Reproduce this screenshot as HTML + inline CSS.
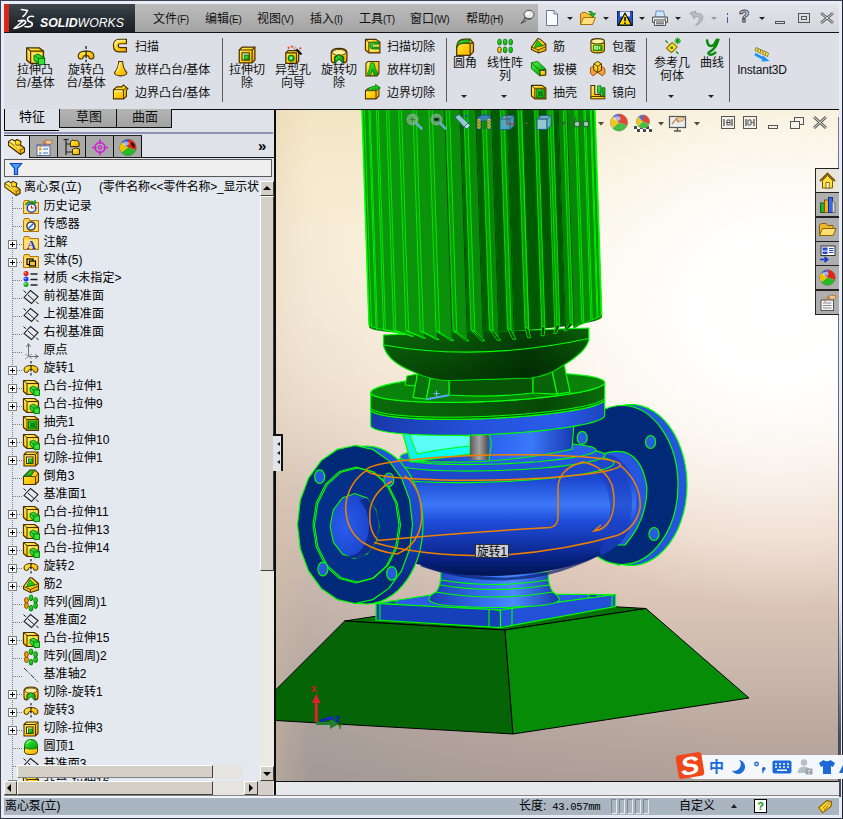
<!DOCTYPE html>
<html lang="zh-CN"><head><meta charset="utf-8"><title>SolidWorks</title>
<style>
html,body{margin:0;padding:0}
body{width:843px;height:819px;position:relative;overflow:hidden;background:#e9ecf3;font-family:"Liberation Sans","Noto Sans CJK SC",sans-serif;font-size:12px;color:#000}
.a{position:absolute}
.t{position:absolute;white-space:nowrap;line-height:14px;font-size:12px}
.c{text-align:center}
.m{position:absolute;top:11px;font-size:12px;line-height:16px;white-space:nowrap;color:#111}
.m i{font-style:normal;font-size:10px;letter-spacing:-0.3px}
.rb{position:absolute;font-size:12px;line-height:13px;text-align:center;white-space:nowrap;color:#111}
.rs{position:absolute;font-size:12px;line-height:14px;white-space:nowrap;color:#111}
.sep{position:absolute;width:1px;background:#5a5a5a;top:38px;height:64px}
.dd{position:absolute;width:0;height:0;border-left:3px solid transparent;border-right:3px solid transparent;border-top:3px solid #222}
.tr{position:absolute;left:44px;font-size:12px;line-height:14px;white-space:nowrap;color:#000;letter-spacing:0.1px}
.pl{position:absolute;left:8px;width:9px;height:9px;box-sizing:border-box;border:1px solid #808080;background:#fff}
.pl:before{content:"";position:absolute;left:1px;top:3px;width:5px;height:1px;background:#000}
.pl:after{content:"";position:absolute;left:3px;top:1px;width:1px;height:5px;background:#000}
.hd{position:absolute;height:1px;border-top:1px dotted #808080}
svg{position:absolute;overflow:visible}
</style></head>
<body>
<svg width="0" height="0" style="position:absolute"><defs><linearGradient id="gy" x1="0" y1="0" x2="1" y2="1"><stop offset="0" stop-color="#fff27a"/><stop offset="0.45" stop-color="#ffd414"/><stop offset="1" stop-color="#f0a800"/></linearGradient><linearGradient id="gg" x1="0" y1="0" x2="1" y2="1"><stop offset="0" stop-color="#58f058"/><stop offset="0.5" stop-color="#1ec81e"/><stop offset="1" stop-color="#0a9a0a"/></linearGradient></defs></svg>
<div class="a" style="left:0;top:0;width:843px;height:819px;box-sizing:border-box;border:1px solid #3a4152;border-right:1.5px solid #1c2232;border-bottom:1.5px solid #2a3040"></div>
<div class="a" style="left:4px;top:4px;width:131px;height:28px;background:linear-gradient(#3d464e,#2b3138 45%,#1b1f24)"></div>
<div class="a" style="left:4px;top:4px;width:5px;height:28px;background:#d8261a"></div>
<div class="a" style="left:135px;top:4px;width:403px;height:28px;background:linear-gradient(#bcbcbc,#b0b0b0 50%,#a4a4a4)"></div>
<div class="a" style="left:538px;top:4px;width:301px;height:28px;background:linear-gradient(#e2e4e9,#d3d6dc)"></div>
<div class="a" style="left:4px;top:32px;width:835px;height:1px;background:#101216"></div>
<div class="a" style="left:4px;top:33px;width:131px;height:1px;background:#f0f1f5"></div>
<svg style="left:10px;top:6px" width="124" height="26" viewBox="0 0 124 26"><g fill="none" stroke="#fff" stroke-width="1.6" stroke-linecap="round" stroke-linejoin="round"><path d="M11.5 3.5 L17.5 4.5 Q15.5 9 13 10.5"/><path d="M13.5 14.5 L4 22.5 Q11 21.5 15.5 17 Q16.5 13 8.5 15"/><path d="M23.5 10.5 Q18 9.5 17.5 13 Q17.5 15.5 20.5 16 Q23 17 22 19.5 Q20 21.5 15 20.5"/></g><text x="30" y="20.5" font-family='"Liberation Sans",sans-serif' font-size="13.5" font-style="italic" fill="#fff" textLength="84" lengthAdjust="spacingAndGlyphs"><tspan font-weight="bold">SOLID</tspan><tspan font-weight="normal">WORKS</tspan></text></svg>
<div class="m" style="left:153px">文件<i>(F)</i></div>
<div class="m" style="left:205px">编辑<i>(E)</i></div>
<div class="m" style="left:257px">视图<i>(V)</i></div>
<div class="m" style="left:310px">插入<i>(I)</i></div>
<div class="m" style="left:359px">工具<i>(T)</i></div>
<div class="m" style="left:410px">窗口<i>(W)</i></div>
<div class="m" style="left:466px">帮助<i>(H)</i></div>
<div class="a" style="left:4px;top:33px;width:835px;height:76px;background:#dcdfe5"></div>
<div class="a" style="left:59px;top:109px;width:780px;height:1px;background:#0c0c0c"></div>
<svg style="left:24.92px;top:45.42px" width="20.16" height="20.16" viewBox="0 0 18 18"><path d="M1.5 2.500 H12.500 L16.500 5.500 V16.500 H5 L1.5 13.500 Z" fill="url(#gy)" stroke="#4a3000" stroke-width="1.2" stroke-linejoin="round"/><path d="M5 5.500 H16.500 M5 5.500 V16.500 M1.5 2.500 L5 5.500" fill="none" stroke="#4a3000" stroke-width="1"/><path d="M6.500 7 H15 V15 H6.500 Z" fill="#ffe56a" stroke="none"/><path d="M8 9.500 L11.500 8 L17.500 11.500 V16.500 L13.500 17.800 L8 13.500 Z" fill="url(#gg)" stroke="#0a7a0a" stroke-width="0.9"/><path d="M12 12 H17.500 V17.500 H12 Z" fill="#38e038" stroke="#0a7a0a" stroke-width="0.9"/><path d="M8 9.500 L12 12" stroke="#0a7a0a" stroke-width="0.8"/></svg>
<div class="rb" style="left:-5px;top:64px;width:80px">拉伸凸<br>台/基体</div>
<svg style="left:75.92px;top:45.42px" width="20.16" height="20.16" viewBox="0 0 18 18"><path d="M9 1 V17" stroke="#000" stroke-width="1" stroke-dasharray="2.5 1.5" fill="none"/><path d="M2 10 Q2 5.5 9 5.5 Q16 5.5 16 10 Q16 12.5 13.5 12.5 Q11.5 12.5 11.5 10.5 Q11.5 9.5 9 9.5 Q6.5 9.5 6.5 10.5 Q6.5 12.5 4.5 12.5 Q2 12.5 2 10 Z" fill="url(#gy)" stroke="#4a3000" stroke-width="1"/><path d="M9 5.5 V9.5" stroke="#000" stroke-width="1" fill="none"/></svg>
<div class="rb" style="left:46px;top:64px;width:80px">旋转凸<br>台/基体</div>
<svg style="left:111.83px;top:37.33px" width="17.34" height="17.34" viewBox="0 0 18 18"><path d="M15 2.5 H8 Q1.5 2.5 1.5 9 Q1.5 15.5 8 15.5 H15 V11 H8.5 Q6.5 11 6.5 9 Q6.5 7 8.5 7 H15 Z" fill="url(#gy)" stroke="#4a3000" stroke-width="1.2"/><path d="M14 3.5 H8 Q3 3.5 2.8 8" stroke="#fff0a0" stroke-width="1.2" fill="none"/></svg>
<div class="rs" style="left:135px;top:40px">扫描</div>
<svg style="left:111.83px;top:60.33px" width="17.34" height="17.34" viewBox="0 0 18 18"><path d="M7 1.5 H11 Q11.5 9 15.5 13 Q15 16.5 9 16.5 Q3 16.5 2.5 13 Q6.5 9 7 1.5 Z" fill="url(#gy)" stroke="#4a3000" stroke-width="1.1"/><path d="M8 3 Q7.5 9 4.5 12.5" stroke="#fff0a0" stroke-width="1.3" fill="none"/></svg>
<div class="rs" style="left:135px;top:63px">放样凸台/基体</div>
<svg style="left:111.83px;top:83.33px" width="17.34" height="17.34" viewBox="0 0 18 18"><path d="M1.5 7 L5 4 H10 L12 2 L16.5 6 L15 7 V14 L12 16.5 H1.5 Z" fill="url(#gy)" stroke="#4a3000" stroke-width="1.1"/><path d="M1.5 7 H12 V16.5 M12 7 L15 4.5" stroke="#4a3000" fill="none" stroke-width="1"/><path d="M3 8.5 H10.5" stroke="#fff0a0" stroke-width="1.4"/></svg>
<div class="rs" style="left:135px;top:86px">边界凸台/基体</div>
<div class="sep" style="left:222px"></div>
<svg style="left:236.92px;top:45.42px" width="20.16" height="20.16" viewBox="0 0 18 18"><path d="M2 4.5 L4.5 2 H16 V13.5 L13.5 16 H2 Z" fill="url(#gy)" stroke="#4a3000" stroke-width="1.1"/><path d="M2 4.5 H13.5 V16 M13.5 4.5 L16 2" fill="none" stroke="#4a3000" stroke-width="1"/><rect x="4.5" y="7" width="6.5" height="6.5" fill="#fff7c0" stroke="#4a3000" stroke-width="1"/><rect x="6.5" y="9" width="4" height="4" fill="url(#gg)" stroke="#0a7a0a" stroke-width="0.9"/></svg>
<div class="rb" style="left:207px;top:64px;width:80px">拉伸切<br>除</div>
<svg style="left:282.92px;top:45.42px" width="20.16" height="20.16" viewBox="0 0 18 18"><path d="M2.5 7 L4.5 5 H14 V14.5 L12 16.5 H2.5 Z" fill="url(#gy)" stroke="#4a3000" stroke-width="1.1"/><path d="M2.5 7 H12 V16.5" fill="none" stroke="#4a3000"/><circle cx="7.3" cy="11.8" r="2.6" fill="url(#gg)" stroke="#0a7a0a"/><circle cx="7.3" cy="11.8" r="0.9" fill="#fff"/><path d="M10 2 L16.5 8.5" stroke="#111" stroke-width="2"/><path d="M10 2 L12 4" stroke="#ddd" stroke-width="1.6"/><path d="M5 1.5 v2 M4 2.5 h2 M8 0.5 v2 M7 1.5 h2 M15.5 2 v2 M14.5 3 h2" stroke="#f04000" stroke-width="0.9"/></svg>
<div class="rb" style="left:253px;top:64px;width:80px">异型孔<br>向导</div>
<svg style="left:328.92px;top:45.42px" width="20.16" height="20.16" viewBox="0 0 18 18"><path d="M2 7 Q2 3 9 3 Q16 3 16 7 V13 Q16 16 13 16 V11 L9 8 L5 11 V16 Q2 16 2 13 Z" fill="url(#gy)" stroke="#4a3000" stroke-width="1.1"/><ellipse cx="9" cy="6.6" rx="6" ry="2.6" fill="#fff0a0" stroke="#4a3000" stroke-width="0.8"/><path d="M5.5 16 V11.5 L9 8.5 L12.5 11.5 V16 L9 12.5 Z" fill="url(#gg)" stroke="#0a7a0a" stroke-width="0.9"/></svg>
<div class="rb" style="left:299px;top:64px;width:80px">旋转切<br>除</div>
<svg style="left:363.83px;top:37.33px" width="17.34" height="17.34" viewBox="0 0 18 18"><path d="M1.5 2.500 H12.500 L16.500 5.500 V16.500 H5 L1.5 13.500 Z" fill="url(#gy)" stroke="#4a3000" stroke-width="1.2" stroke-linejoin="round"/><path d="M5 5.500 H16.500 M5 5.500 V16.500 M1.5 2.500 L5 5.500" fill="none" stroke="#4a3000" stroke-width="1"/><path d="M6.500 7 H15 V15 H6.500 Z" fill="#ffe56a" stroke="none"/><path d="M15 5.5 H9.5 Q6 5.5 6 9 Q6 12.5 9.5 12.5 H15 V10.5 H10 Q8.5 10.5 8.5 9 Q8.5 7.5 10 7.5 H15 Z" fill="url(#gg)" stroke="#0a7a0a" stroke-width="0.9"/></svg>
<div class="rs" style="left:387px;top:40px">扫描切除</div>
<svg style="left:363.83px;top:60.33px" width="17.34" height="17.34" viewBox="0 0 18 18"><path d="M2 3.5 L4 1.5 H15.5 V14 L13.5 16.5 H2 Z" fill="url(#gy)" stroke="#4a3000" stroke-width="1.1"/><path d="M7 3 H10.5 Q11 9 14.5 14.5 L11 16.5 L8.7 10 L6.5 16.5 L3.5 14.5 Q6.5 9 7 3 Z" fill="url(#gg)" stroke="#0a7a0a" stroke-width="0.9"/></svg>
<div class="rs" style="left:387px;top:63px">放样切割</div>
<svg style="left:363.83px;top:83.33px" width="17.34" height="17.34" viewBox="0 0 18 18"><path d="M1.5 8 L4.5 5.5 H15.5 V13.5 L12.5 16.5 H1.5 Z" fill="url(#gy)" stroke="#4a3000" stroke-width="1.1"/><path d="M1.5 8 H12.5 V16.5 M12.5 8 L15.5 5.5" fill="none" stroke="#4a3000"/><path d="M4 6 L9 3.5 H12 V1.5 L17 5 L12 8.5 V6.5 H9.5 L6.5 8 Z" fill="url(#gg)" stroke="#0a7a0a" stroke-width="0.9"/></svg>
<div class="rs" style="left:387px;top:86px">边界切除</div>
<div class="sep" style="left:446px"></div>
<svg style="left:454.92px;top:37.42px" width="20.16" height="20.16" viewBox="0 0 18 18"><path d="M1.5 9 Q1.5 2 9 2 H13.5 L16.5 5.5 V13 L13.5 16.5 H1.5 Z" fill="url(#gy)" stroke="#4a3000" stroke-width="1.1"/><path d="M1.5 9.5 Q2.5 5.5 9 5.5 H13.5 L16.5 5.5 M13.5 5.5 V16.5" fill="none" stroke="#4a3000" stroke-width="1"/><path d="M2 8.5 Q2.5 2.8 9 2.6 H13 L12.5 5 H8.5 Q3.5 5 2 8.5 Z" fill="url(#gg)" stroke="#0a7a0a" stroke-width="0.8"/></svg>
<div class="rb" style="left:425px;top:57px;width:80px">圆角</div>
<svg style="left:494.92px;top:37.42px" width="20.16" height="20.16" viewBox="0 0 18 18"><rect x="2.5" y="2" width="3" height="5" rx="1.4" fill="url(#gg)" stroke="#0a7a0a" stroke-width="0.8"/><rect x="7.5" y="2" width="3" height="5" rx="1.4" fill="url(#gg)" stroke="#0a7a0a" stroke-width="0.8"/><rect x="12.5" y="2" width="3" height="5" rx="1.4" fill="url(#gg)" stroke="#0a7a0a" stroke-width="0.8"/><rect x="2.5" y="9" width="3" height="5" rx="1.4" fill="url(#gy)" stroke="#4a3000" stroke-width="0.8"/><rect x="7.5" y="9" width="3" height="5" rx="1.4" fill="url(#gg)" stroke="#0a7a0a" stroke-width="0.8"/><rect x="12.5" y="9" width="3" height="5" rx="1.4" fill="url(#gg)" stroke="#0a7a0a" stroke-width="0.8"/></svg>
<div class="rb" style="left:465px;top:57px;width:80px">线性阵<br>列</div>
<div class="dd" style="left:461px;top:95px"></div><div class="dd" style="left:501px;top:95px"></div>
<svg style="left:529.83px;top:37.33px" width="17.34" height="17.34" viewBox="0 0 18 18"><path d="M1.5 10.500 L8 1.5 L10 2 L16.500 7.500 V14 L8.500 16.500 L1.5 13 Z" fill="url(#gy)" stroke="#4a3000" stroke-width="1.1" stroke-linejoin="round"/><path d="M8 3.500 L13 9 L4.500 11 Z" fill="url(#gg)" stroke="#0a7a0a" stroke-width="0.9"/><path d="M1.5 10.500 L8.500 13.500 L16.500 10 M8.500 13.500 V16.500 M13 9 L16.500 7.500" fill="none" stroke="#4a3000" stroke-width="0.9"/></svg>
<div class="rs" style="left:553px;top:40px">筋</div>
<svg style="left:529.83px;top:60.33px" width="17.34" height="17.34" viewBox="0 0 18 18"><path d="M1.5 3 L8 1.5 L16.5 9.5 V15.5 L10 16.5 L1.5 9 Z" fill="url(#gg)" stroke="#0a7a0a" stroke-width="1"/><path d="M1.5 3 L10 10.5 L16.5 9.5 M10 10.5 V16.5" stroke="#0a7a0a" fill="none"/><rect x="10.5" y="10.8" width="5.5" height="5" fill="url(#gy)" stroke="#4a3000" stroke-width="0.9"/></svg>
<div class="rs" style="left:553px;top:63px">拔模</div>
<svg style="left:529.83px;top:83.33px" width="17.34" height="17.34" viewBox="0 0 18 18"><path d="M1.5 2.500 H12.500 L16.500 5.500 V16.500 H5 L1.5 13.500 Z" fill="url(#gy)" stroke="#4a3000" stroke-width="1.2" stroke-linejoin="round"/><path d="M5 5.500 H16.500 M5 5.500 V16.500 M1.5 2.500 L5 5.500" fill="none" stroke="#4a3000" stroke-width="1"/><path d="M6.500 7 H15 V15 H6.500 Z" fill="#ffe56a" stroke="none"/><rect x="6.500" y="7" width="8.500" height="8" fill="url(#gg)" stroke="#0a7a0a" stroke-width="1"/><rect x="8.500" y="9" width="4.500" height="4" fill="#0a8a0a" stroke="#0a7a0a" stroke-width="0.7"/><path d="M6.500 7 L8.500 9 M15 7 L13 9 M6.500 15 L8.500 13 M15 15 L13 13" stroke="#0a7a0a" stroke-width="0.7"/></svg>
<div class="rs" style="left:553px;top:86px">抽壳</div>
<svg style="left:588.83px;top:37.33px" width="17.34" height="17.34" viewBox="0 0 18 18"><path d="M2 4.5 V13.5 Q2 16.5 9 16.5 Q16 16.5 16 13.5 V4.5" fill="url(#gy)" stroke="#4a3000" stroke-width="1.1"/><ellipse cx="9" cy="4.5" rx="7" ry="2.8" fill="#fff0a0" stroke="#4a3000" stroke-width="1.1"/><rect x="4.5" y="8.5" width="9" height="5.5" fill="url(#gg)" stroke="#0a7a0a" stroke-width="0.8"/><path d="M6 10 h3 v2.5 h-3 z M11 10 v2.8" stroke="#fff8b0" stroke-width="1" fill="none"/></svg>
<div class="rs" style="left:612px;top:40px">包覆</div>
<svg style="left:588.83px;top:60.33px" width="17.34" height="17.34" viewBox="0 0 18 18"><path d="M1.5 8 L5.5 6 L9 8 L12.5 6 L16.5 9 V14 L14 16.5 L9 13 L4 16.5 L1.5 14 Z" fill="#f0a040" stroke="#a05000" stroke-width="1"/><path d="M5 4 L9 1.5 L13 4 V10.5 L9 13 L5 10.5 Z" fill="url(#gy)" stroke="#4a3000" stroke-width="1"/><path d="M5 4 L9 6.5 L13 4 M9 6.5 V13" fill="none" stroke="#4a3000" stroke-width="0.9"/></svg>
<div class="rs" style="left:612px;top:63px">相交</div>
<svg style="left:588.83px;top:83.33px" width="17.34" height="17.34" viewBox="0 0 18 18"><path d="M2 2.5 H6 V12 H12 V16 H2 Z" fill="url(#gy)" stroke="#4a3000" stroke-width="1.1"/><path d="M9 3 H12.5 V10.5 H9 Z M13.5 5 H16.5 V14 H13.5 Z" fill="url(#gg)" stroke="#0a7a0a" stroke-width="1"/><path d="M2 14 H16.5 V16.5 H2 Z" fill="url(#gy)" stroke="#4a3000" stroke-width="1"/></svg>
<div class="rs" style="left:612px;top:86px">镜向</div>
<div class="sep" style="left:646px"></div>
<svg style="left:661.92px;top:37.42px" width="20.16" height="20.16" viewBox="0 0 18 18"><path d="M3 3 L15.5 16" stroke="#0a8a0a" stroke-width="1.1" stroke-dasharray="3 1.6"/><path d="M4 10 L9 5 L13.5 9 L8.5 14 Z" fill="#ffe030" stroke="#a07800" stroke-width="1.1"/><rect x="7.6" y="8.5" width="2.2" height="2.2" fill="#0a8a0a"/><path d="M14 0.5 V6.5 M11 3.5 H17 M12 1.5 L16 5.5 M16 1.5 L12 5.5" stroke="#0a9a0a" stroke-width="0.9"/></svg>
<div class="rb" style="left:632px;top:57px;width:80px">参考几<br>何体</div>
<svg style="left:701.92px;top:37.42px" width="20.16" height="20.16" viewBox="0 0 18 18"><path d="M4.5 3 Q5 8 8 8 Q11 8 12.5 3.5 Q13 2 14.5 2.5 Q13.5 6 12 8.5 Q9.5 12 6.5 13.5 Q5 14.5 6.5 15.5 Q9 16.5 12 14" fill="none" stroke="#0a8a0a" stroke-width="2.2" stroke-linecap="round"/></svg>
<div class="rb" style="left:672px;top:57px;width:80px">曲线</div>
<div class="dd" style="left:668px;top:95px"></div><div class="dd" style="left:708px;top:95px"></div>
<div class="sep" style="left:729px"></div>
<svg style="left:752px;top:44px" width="22" height="20" viewBox="0 0 22 20"><path d="M4 3.5 L16.5 9 L15.5 12.5 L3 6.5 Z" fill="#f6e24a" stroke="#8a7a20" stroke-width="0.9"/><path d="M6 5 v2 M8.5 6 v2 M11 7.2 v2 M13.5 8.4 v2" stroke="#555" stroke-width="0.8"/><path d="M3 10 L13 15.5" stroke="#1e90ff" stroke-width="2.6"/><path d="M11 11.5 L17.5 17 L9.5 17.5 Z" fill="#1e90ff"/></svg>
<div class="rb" style="left:722px;top:64px;width:80px;letter-spacing:-0.2px">Instant3D</div>
<svg style="left:544px;top:9px" width="16" height="18" viewBox="0 0 16 18"><path d="M2.5 1.5 H10 L13.5 5 V16.5 H2.5 Z" fill="#f8fbff" stroke="#6a7a90" stroke-width="1"/><path d="M10 1.5 V5 H13.5" fill="#d6e2f0" stroke="#6a7a90" stroke-width="1"/></svg>
<div class="dd" style="left:567px;top:17px"></div>
<svg style="left:579px;top:9px" width="18" height="18" viewBox="0 0 18 18"><path d="M1.5 5 L3 3.5 H7 L8.5 5 H13.5 V15.5 H1.5 Z" fill="#f5c040" stroke="#a87000" stroke-width="1"/><path d="M1.5 15.5 L4.5 8.5 H16.5 L13.5 15.5 Z" fill="#ffe080" stroke="#a87000" stroke-width="1"/><path d="M9.5 2.5 Q13 1.5 14.5 4.5 L16.5 4 L14.2 8.2 L10.8 5.6 L12.8 5 Q11.8 3.4 9.5 2.5 Z" fill="#20c020" stroke="#087808" stroke-width="0.7"/></svg>
<div class="dd" style="left:603px;top:17px"></div>
<svg style="left:616px;top:9px" width="18" height="18" viewBox="0 0 18 18"><rect x="1.5" y="2.5" width="15" height="14" fill="#2850c8" stroke="#102870" stroke-width="1"/><rect x="4" y="2.5" width="10" height="5" fill="#e8eef8"/><path d="M9 4 L15.5 16 H2.5 Z" fill="#ffd800" stroke="#000" stroke-width="1.1" stroke-linejoin="round"/><path d="M9 8 V12.3" stroke="#000" stroke-width="1.5"/><circle cx="9" cy="14.2" r="0.9" fill="#000"/></svg>
<div class="dd" style="left:639px;top:17px"></div>
<svg style="left:651px;top:9px" width="18" height="18" viewBox="0 0 18 18"><path d="M5 2 H12.5 L14 8 H4.5 Z" fill="#cfe6ff" stroke="#5a88c0" stroke-width="0.9"/><path d="M1.5 8 H16.5 V13.5 H1.5 Z" fill="#e4e4e4" stroke="#555" stroke-width="1"/><path d="M3.5 11 H14.5 V16.5 H3.5 Z" fill="#fafafa" stroke="#555" stroke-width="1"/><path d="M5 13 H13 M5 14.8 H13" stroke="#333" stroke-width="0.9"/><circle cx="14.3" cy="9.8" r="0.8" fill="#2a2"/></svg>
<div class="dd" style="left:675px;top:17px"></div>
<svg style="left:688px;top:9px" width="18" height="18" viewBox="0 0 18 18"><path d="M2 4 L8 2 L7.5 4.5 Q14.5 3.5 15 8.5 Q15 12 10 15.5 L7.5 16.5 Q12 12 11.5 9 Q11 7 7 7.5 L6.5 10 Z" fill="#b9bcc2" stroke="#9a9da4" stroke-width="0.8"/></svg>
<div class="dd" style="left:711px;top:17px;border-top-color:#999"></div>
<div class="a" style="left:727px;top:13px;width:1px;height:2px;background:#3a58b0"></div><div class="a" style="left:727px;top:17px;width:1px;height:6px;background:#3a58b0"></div>
<div class="t" style="left:739px;top:6px;font-size:17px;line-height:22px;color:#f4f5f8;-webkit-text-stroke:1px #3a3f50;font-weight:bold;font-family:'Liberation Sans',sans-serif">?</div>
<div class="dd" style="left:759px;top:17px"></div>
<div class="a" style="left:775px;top:21px;width:10px;height:3px;box-sizing:border-box;border:1px solid #555"></div>
<div class="a" style="left:798px;top:13px;width:12px;height:10px;box-sizing:border-box;border:1px solid #555"></div><div class="a" style="left:801px;top:16px;width:6px;height:4px;box-sizing:border-box;border:1px solid #555"></div>
<svg style="left:820px;top:12px" width="14" height="12"><path d="M1 1 L13 11 M13 1 L1 11" stroke="#555" stroke-width="2.6" fill="none"/><path d="M1 1 L13 11 M13 1 L1 11" stroke="#e4e6ea" stroke-width="1" fill="none"/></svg>
<svg style="left:518px;top:8px" width="18" height="18" viewBox="0 0 18 18"><ellipse cx="11" cy="6.5" rx="5" ry="4.2" fill="#e8e8e8" stroke="#555" stroke-width="1"/><ellipse cx="9.8" cy="5.5" rx="2.2" ry="1.6" fill="#fff"/><path d="M7 10 L3 15.5 L8.5 12.5" fill="#999" stroke="#444" stroke-width="0.9"/><path d="M6.5 9 Q9 12.5 13.5 10.5" fill="none" stroke="#444" stroke-width="1.2"/></svg>
<div class="a" style="left:4px;top:110px;width:270px;height:687px;background:#dfe2e9"></div>
<div class="a" style="left:4px;top:109px;width:55px;height:22px;box-sizing:border-box;border-left:1px solid #000;border-bottom:1px solid #000;background:#dfe2e9"></div>
<div class="a" style="left:59px;top:109px;width:58px;height:19px;box-sizing:border-box;border:1px solid #111;border-top:none;background:linear-gradient(#b4b4b4,#a2a2a2)"></div>
<div class="a" style="left:116px;top:109px;width:56px;height:19px;box-sizing:border-box;border:1px solid #111;border-top:none;background:linear-gradient(#b4b4b4,#a2a2a2)"></div>
<div class="t" style="left:19px;top:110px;font-size:13px">特征</div>
<div class="t" style="left:76px;top:110px;font-size:13px;color:#111">草图</div>
<div class="t" style="left:132px;top:110px;font-size:13px;color:#111">曲面</div>
<div class="a" style="left:4px;top:132px;width:269px;height:2px;background:#8c93b4"></div>
<div class="a" style="left:4px;top:135px;width:138px;height:1px;background:#222"></div>
<div class="a" style="left:4px;top:157px;width:270px;height:1px;background:#181818"></div>
<div class="a" style="left:4px;top:136px;width:25px;height:22px;background:#e6e9ef"></div>
<div class="a" style="left:29px;top:136px;width:29px;height:21px;box-sizing:border-box;border:1px solid #111;border-top:none;border-bottom:none;background:#a9a9a9"></div>
<div class="a" style="left:57px;top:136px;width:29px;height:21px;box-sizing:border-box;border:1px solid #111;border-top:none;border-bottom:none;background:#a9a9a9"></div>
<div class="a" style="left:85px;top:136px;width:29px;height:21px;box-sizing:border-box;border:1px solid #111;border-top:none;border-bottom:none;background:#a9a9a9"></div>
<div class="a" style="left:113px;top:136px;width:29px;height:21px;box-sizing:border-box;border:1px solid #111;border-top:none;border-bottom:none;background:#a9a9a9"></div>
<svg style="left:7px;top:137px" width="19" height="20" viewBox="0 0 19 20"><path d="M1.5 4.5 L5 2.5 L8 4 L10 2.5 L14 4.5 L13.5 8 L17.5 11 V15 L13.5 17.5 L1.5 8.5 Z" fill="url(#gy)" stroke="#3a2a00" stroke-width="1.1" stroke-linejoin="round"/><path d="M1.5 4.5 L13.5 13 L17.5 11 M13.5 13 V17.5 M8 4 L8.5 8 L13.5 8 M8.5 8 L10.5 10.5" fill="none" stroke="#6a4a00" stroke-width="0.9"/><path d="M3 5 L5 4 L7 5 L8 8.5 L12.5 12" stroke="#fff0a0" stroke-width="1.2" fill="none"/></svg>
<svg style="left:34px;top:138px" width="20" height="19" viewBox="0 0 20 19"><rect x="3" y="6.5" width="13" height="11" fill="#f4f6fa" stroke="#5a6a9a" stroke-width="1"/><rect x="3" y="6.5" width="13" height="2" fill="#7088c8"/><rect x="5" y="10" width="2.5" height="2.5" fill="#f0a000"/><rect x="5" y="14" width="2.5" height="2.5" fill="#aaa"/><path d="M9 11 H14 M9 15 H14" stroke="#6aa0d8" stroke-width="1.6"/><path d="M6 9 L10.5 3.5 L14 7" fill="none" stroke="#c08040" stroke-width="1.6"/><path d="M10 3.5 Q13 1 18 2.5 Q19 5 17 6 L13.5 6.5 Z" fill="#f0c898" stroke="#a06830" stroke-width="0.8"/></svg>
<svg style="left:62px;top:138px" width="20" height="19" viewBox="0 0 20 19"><path d="M4 1.5 V17 M4 6 H9 M4 14 H11" stroke="#222" stroke-width="1.2" fill="none"/><path d="M1.5 1.5 H6.5" stroke="#222" stroke-width="1.2"/><path d="M8.5 3.5 L11 2 L13.5 3 L14.5 2 L17 4 V8.5 H8.5 Z" fill="url(#gy)" stroke="#3a2a00" stroke-width="1"/><path d="M10.5 11.5 L13 10 L17.5 11 V16.5 H10.5 Z" fill="url(#gy)" stroke="#3a2a00" stroke-width="1"/></svg>
<svg style="left:90px;top:138px" width="20" height="19" viewBox="0 0 20 19"><circle cx="10" cy="9.5" r="5" fill="none" stroke="#d020d0" stroke-width="1.6"/><circle cx="10" cy="9.5" r="1.6" fill="none" stroke="#d020d0" stroke-width="1.2"/><path d="M10 1.5 V6 M10 13 V17.5 M2 9.5 H6.5 M13.5 9.5 H18" stroke="#d020d0" stroke-width="1.6"/></svg>
<svg style="left:118px;top:138px" width="20" height="19" viewBox="0 0 20 19"><circle cx="10" cy="9.5" r="8" fill="#e8e8e8" stroke="#444" stroke-width="0.8"/><path d="M10 9.5 L10 1.5 A8 8 0 0 1 17.6 12 Z" fill="#e02818"/><path d="M10 9.5 L17.6 12 A8 8 0 0 1 3.5 14.2 Z" fill="#28b828"/><path d="M10 9.5 L3.5 14.2 A8 8 0 0 1 4 4.2 Z" fill="#f0c000"/><path d="M10 9.5 L4 4.2 A8 8 0 0 1 10 1.5 Z" fill="#2858e0"/><ellipse cx="8" cy="5.5" rx="3" ry="2" fill="#fff" opacity="0.55"/><path d="M13 4 Q17 5 16.5 10 Q13 8 13 4Z" fill="#201010"/></svg>
<div class="t" style="left:258px;top:138px;font-size:15px;line-height:16px;font-weight:bold">»</div>
<div class="a" style="left:4px;top:159px;width:268px;height:18px;box-sizing:border-box;border:1px solid #5a5a5a;background:#efefef"></div>
<svg style="left:9px;top:162px" width="14" height="14"><path d="M1.5 1.5 H12.5 L8.5 6.5 V12.5 H5.5 V6.5 Z" fill="#4aa0ff" stroke="#1040c0" stroke-width="1.2"/></svg>
<div class="a" style="left:4px;top:178px;width:256px;height:603px;background:#e4e8ef"></div>
<svg style="left:3px;top:179px" width="19" height="19" viewBox="0 0 19 20"><path d="M1.5 4.5 L5 2.5 L8 4 L10 2.5 L14 4.5 L13.5 8 L17.5 11 V15 L13.5 17.5 L1.5 8.5 Z" fill="url(#gy)" stroke="#3a2a00" stroke-width="1.1" stroke-linejoin="round"/><path d="M1.5 4.5 L13.5 13 L17.5 11 M13.5 13 V17.5 M8 4 L8.5 8 L13.5 8 M8.5 8 L10.5 10.5" fill="none" stroke="#6a4a00" stroke-width="0.9"/><path d="M3 5 L5 4 L7 5 L8 8.5 L12.5 12" stroke="#fff0a0" stroke-width="1.2" fill="none"/></svg>
<div class="t" style="left:24px;top:180px;letter-spacing:0.3px">离心泵(立)</div>
<div class="t" style="left:99px;top:180px;letter-spacing:-0.25px">(零件名称&lt;&lt;零件名称&gt;_显示状</div>
<div class="a" style="left:12px;top:197px;width:0;height:584px;border-left:1px dotted #808080"></div>
<div class="a" style="left:4px;top:178px;width:256px;height:603px;overflow:hidden">
<div class="hd" style="left:9px;top:30px;width:9px"></div>
<svg style="left:18px;top:19.5px" width="18" height="18" viewBox="0 0 18 18"><path d="M1.5 4.5 L2.5 2.5 H7 L8 4.5 H16.5 V15.5 H1.5 Z" fill="#ffcf40" stroke="#b87400" stroke-width="1"/><path d="M2.5 5.5 H15.5 V14.5 H2.5 Z" fill="#ffe27a" stroke="none"/><circle cx="9.5" cy="10" r="4.3" fill="#fff" stroke="#2040d0" stroke-width="1.6"/><path d="M9.5 7.5 V10 H11.8" stroke="#d02020" stroke-width="1.1" fill="none"/><path d="M3 6.5 Q6 2 12 3.5 L13.5 2 V6 H9.5 L11 4.5 Q7 3.5 4.5 7 Z" fill="#20b020" stroke="#087008" stroke-width="0.5"/></svg>
<div class="tr" style="left:39.5px;top:21px">历史记录</div>
<div class="hd" style="left:9px;top:48px;width:9px"></div>
<svg style="left:18px;top:37.5px" width="18" height="18" viewBox="0 0 18 18"><path d="M1.5 4.5 L2.5 2.5 H7 L8 4.5 H16.5 V15.5 H1.5 Z" fill="#ffcf40" stroke="#b87400" stroke-width="1"/><path d="M2.5 5.5 H15.5 V14.5 H2.5 Z" fill="#ffe27a" stroke="none"/><circle cx="9" cy="10" r="4.2" fill="#f4f4f4" stroke="#333" stroke-width="1.2"/><path d="M6.5 12.5 L11.5 7.5" stroke="#2060e0" stroke-width="1.4"/><path d="M9 5.8 v1 M9 13.2 v1 M4.8 10 h1 M12.2 10 h1" stroke="#333" stroke-width="0.8"/></svg>
<div class="tr" style="left:39.5px;top:39px">传感器</div>
<div class="hd" style="left:13px;top:66px;width:5px"></div>
<div class="pl" style="left:4px;top:62px"></div>
<svg style="left:18px;top:55.5px" width="18" height="18" viewBox="0 0 18 18"><path d="M1.5 4.5 L2.5 2.5 H7 L8 4.5 H16.5 V15.5 H1.5 Z" fill="#ffcf40" stroke="#b87400" stroke-width="1"/><path d="M2.5 5.5 H15.5 V14.5 H2.5 Z" fill="#ffe27a" stroke="none"/><text x="9.2" y="14.6" text-anchor="middle" font-family='"Liberation Serif",serif' font-weight="bold" font-size="12.5" fill="#1838e0">A</text></svg>
<div class="tr" style="left:39.5px;top:57px">注解</div>
<div class="hd" style="left:13px;top:84px;width:5px"></div>
<div class="pl" style="left:4px;top:80px"></div>
<svg style="left:18px;top:73.5px" width="18" height="18" viewBox="0 0 18 18"><path d="M1.5 4.5 L2.5 2.5 H7 L8 4.5 H16.5 V15.5 H1.5 Z" fill="#ffcf40" stroke="#b87400" stroke-width="1"/><path d="M2.5 5.5 H15.5 V14.5 H2.5 Z" fill="#ffe27a" stroke="none"/><rect x="5" y="7" width="6" height="5.5" fill="none" stroke="#000" stroke-width="1.2"/><rect x="7.5" y="9" width="6" height="5" fill="#ffc820" stroke="#000" stroke-width="1.2"/></svg>
<div class="tr" style="left:39.5px;top:75px">实体(5)</div>
<div class="hd" style="left:9px;top:102px;width:9px"></div>
<svg style="left:18px;top:91.5px" width="18" height="18" viewBox="0 0 18 18"><circle cx="4" cy="3.5" r="2.5" fill="#e01818"/><circle cx="4" cy="9" r="2.5" fill="#2038e8"/><circle cx="4" cy="14.5" r="2.5" fill="#18b018"/><circle cx="3.3" cy="2.8" r="0.9" fill="#ffb0b0"/><circle cx="3.3" cy="8.3" r="0.9" fill="#b0c0ff"/><circle cx="3.3" cy="13.8" r="0.9" fill="#b0ffb0"/><path d="M8.5 4 H15.5 M8.5 9.5 H15.5 M8.5 15 H15.5" stroke="#222" stroke-width="1.6"/></svg>
<div class="tr" style="left:39.5px;top:93px">材质 &lt;未指定&gt;</div>
<div class="hd" style="left:9px;top:120px;width:9px"></div>
<svg style="left:18px;top:109.5px" width="18" height="18" viewBox="0 0 18 18"><path d="M2 9.5 L8.5 2.5 L16 8.500 L9.500 15.500 Z" fill="none" stroke="#1a1a1a" stroke-width="1.1"/><path d="M6 7 L12 12.500 M1.5 2.500 L4 4.800 M14 13.500 L16.500 16" stroke="#1a1a1a" stroke-width="1"/></svg>
<div class="tr" style="left:39.5px;top:111px">前视基准面</div>
<div class="hd" style="left:9px;top:138px;width:9px"></div>
<svg style="left:18px;top:127.5px" width="18" height="18" viewBox="0 0 18 18"><path d="M2 9.5 L8.5 2.5 L16 8.500 L9.500 15.500 Z" fill="none" stroke="#1a1a1a" stroke-width="1.1"/><path d="M6 7 L12 12.500 M1.5 2.500 L4 4.800 M14 13.500 L16.500 16" stroke="#1a1a1a" stroke-width="1"/></svg>
<div class="tr" style="left:39.5px;top:129px">上视基准面</div>
<div class="hd" style="left:9px;top:156px;width:9px"></div>
<svg style="left:18px;top:145.5px" width="18" height="18" viewBox="0 0 18 18"><path d="M2 9.5 L8.5 2.5 L16 8.500 L9.500 15.500 Z" fill="none" stroke="#1a1a1a" stroke-width="1.1"/><path d="M6 7 L12 12.500 M1.5 2.500 L4 4.800 M14 13.500 L16.500 16" stroke="#1a1a1a" stroke-width="1"/></svg>
<div class="tr" style="left:39.5px;top:147px">右视基准面</div>
<div class="hd" style="left:9px;top:174px;width:9px"></div>
<svg style="left:18px;top:163.5px" width="18" height="18" viewBox="0 0 18 18"><path d="M6.5 2 V14.5 H16" fill="none" stroke="#707070" stroke-width="1"/><path d="M4.5 5 L6.5 1.5 L8.5 5 M13 12.5 L16.5 14.5 L13 16.5" fill="none" stroke="#707070" stroke-width="1"/><path d="M3 12 L10 17 M3 17 L10 12" stroke="#909090" stroke-width="0.9"/></svg>
<div class="tr" style="left:39.5px;top:165px">原点</div>
<div class="hd" style="left:13px;top:192px;width:5px"></div>
<div class="pl" style="left:4px;top:188px"></div>
<svg style="left:18px;top:181.5px" width="18" height="18" viewBox="0 0 18 18"><path d="M9 1 V17" stroke="#000" stroke-width="1" stroke-dasharray="2.5 1.5" fill="none"/><path d="M2 10 Q2 5.5 9 5.5 Q16 5.5 16 10 Q16 12.5 13.5 12.5 Q11.5 12.5 11.5 10.5 Q11.5 9.5 9 9.5 Q6.5 9.5 6.5 10.5 Q6.5 12.5 4.5 12.5 Q2 12.5 2 10 Z" fill="url(#gy)" stroke="#4a3000" stroke-width="1"/><path d="M9 5.5 V9.5" stroke="#000" stroke-width="1" fill="none"/></svg>
<div class="tr" style="left:39.5px;top:183px">旋转1</div>
<div class="hd" style="left:13px;top:210px;width:5px"></div>
<div class="pl" style="left:4px;top:206px"></div>
<svg style="left:18px;top:199.5px" width="18" height="18" viewBox="0 0 18 18"><path d="M1.5 2.500 H12.500 L16.500 5.500 V16.500 H5 L1.5 13.500 Z" fill="url(#gy)" stroke="#4a3000" stroke-width="1.2" stroke-linejoin="round"/><path d="M5 5.500 H16.500 M5 5.500 V16.500 M1.5 2.500 L5 5.500" fill="none" stroke="#4a3000" stroke-width="1"/><path d="M6.500 7 H15 V15 H6.500 Z" fill="#ffe56a" stroke="none"/><path d="M8 9.500 L11.500 8 L17.500 11.500 V16.500 L13.500 17.800 L8 13.500 Z" fill="url(#gg)" stroke="#0a7a0a" stroke-width="0.9"/><path d="M12 12 H17.500 V17.500 H12 Z" fill="#38e038" stroke="#0a7a0a" stroke-width="0.9"/><path d="M8 9.500 L12 12" stroke="#0a7a0a" stroke-width="0.8"/></svg>
<div class="tr" style="left:39.5px;top:201px">凸台-拉伸1</div>
<div class="hd" style="left:13px;top:228px;width:5px"></div>
<div class="pl" style="left:4px;top:224px"></div>
<svg style="left:18px;top:217.5px" width="18" height="18" viewBox="0 0 18 18"><path d="M1.5 2.500 H12.500 L16.500 5.500 V16.500 H5 L1.5 13.500 Z" fill="url(#gy)" stroke="#4a3000" stroke-width="1.2" stroke-linejoin="round"/><path d="M5 5.500 H16.500 M5 5.500 V16.500 M1.5 2.500 L5 5.500" fill="none" stroke="#4a3000" stroke-width="1"/><path d="M6.500 7 H15 V15 H6.500 Z" fill="#ffe56a" stroke="none"/><path d="M8 9.500 L11.500 8 L17.500 11.500 V16.500 L13.500 17.800 L8 13.500 Z" fill="url(#gg)" stroke="#0a7a0a" stroke-width="0.9"/><path d="M12 12 H17.500 V17.500 H12 Z" fill="#38e038" stroke="#0a7a0a" stroke-width="0.9"/><path d="M8 9.500 L12 12" stroke="#0a7a0a" stroke-width="0.8"/></svg>
<div class="tr" style="left:39.5px;top:219px">凸台-拉伸9</div>
<div class="hd" style="left:9px;top:246px;width:9px"></div>
<svg style="left:18px;top:235.5px" width="18" height="18" viewBox="0 0 18 18"><path d="M1.5 2.500 H12.500 L16.500 5.500 V16.500 H5 L1.5 13.500 Z" fill="url(#gy)" stroke="#4a3000" stroke-width="1.2" stroke-linejoin="round"/><path d="M5 5.500 H16.500 M5 5.500 V16.500 M1.5 2.500 L5 5.500" fill="none" stroke="#4a3000" stroke-width="1"/><path d="M6.500 7 H15 V15 H6.500 Z" fill="#ffe56a" stroke="none"/><rect x="6.500" y="7" width="8.500" height="8" fill="url(#gg)" stroke="#0a7a0a" stroke-width="1"/><rect x="8.500" y="9" width="4.500" height="4" fill="#0a8a0a" stroke="#0a7a0a" stroke-width="0.7"/><path d="M6.500 7 L8.500 9 M15 7 L13 9 M6.500 15 L8.500 13 M15 15 L13 13" stroke="#0a7a0a" stroke-width="0.7"/></svg>
<div class="tr" style="left:39.5px;top:237px">抽壳1</div>
<div class="hd" style="left:13px;top:264px;width:5px"></div>
<div class="pl" style="left:4px;top:260px"></div>
<svg style="left:18px;top:253.5px" width="18" height="18" viewBox="0 0 18 18"><path d="M1.5 2.500 H12.500 L16.500 5.500 V16.500 H5 L1.5 13.500 Z" fill="url(#gy)" stroke="#4a3000" stroke-width="1.2" stroke-linejoin="round"/><path d="M5 5.500 H16.500 M5 5.500 V16.500 M1.5 2.500 L5 5.500" fill="none" stroke="#4a3000" stroke-width="1"/><path d="M6.500 7 H15 V15 H6.500 Z" fill="#ffe56a" stroke="none"/><path d="M8 9.500 L11.500 8 L17.500 11.500 V16.500 L13.500 17.800 L8 13.500 Z" fill="url(#gg)" stroke="#0a7a0a" stroke-width="0.9"/><path d="M12 12 H17.500 V17.500 H12 Z" fill="#38e038" stroke="#0a7a0a" stroke-width="0.9"/><path d="M8 9.500 L12 12" stroke="#0a7a0a" stroke-width="0.8"/></svg>
<div class="tr" style="left:39.5px;top:255px">凸台-拉伸10</div>
<div class="hd" style="left:13px;top:282px;width:5px"></div>
<div class="pl" style="left:4px;top:278px"></div>
<svg style="left:18px;top:271.5px" width="18" height="18" viewBox="0 0 18 18"><path d="M2 4.5 L4.5 2 H16 V13.5 L13.5 16 H2 Z" fill="url(#gy)" stroke="#4a3000" stroke-width="1.1"/><path d="M2 4.5 H13.5 V16 M13.5 4.5 L16 2" fill="none" stroke="#4a3000" stroke-width="1"/><rect x="4.5" y="7" width="6.5" height="6.5" fill="#fff7c0" stroke="#4a3000" stroke-width="1"/><rect x="6.5" y="9" width="4" height="4" fill="url(#gg)" stroke="#0a7a0a" stroke-width="0.9"/></svg>
<div class="tr" style="left:39.5px;top:273px">切除-拉伸1</div>
<div class="hd" style="left:9px;top:300px;width:9px"></div>
<svg style="left:18px;top:289.5px" width="18" height="18" viewBox="0 0 18 18"><path d="M1.5 8.5 L8 2 H13 L16.5 5.5 V13.5 L13.5 16.5 H1.5 Z" fill="url(#gy)" stroke="#4a3000" stroke-width="1.1"/><path d="M1.5 8.5 H8.5 L13 2 M8.5 8.5 L13.5 8.8 L16.5 5.5 M13.5 8.8 V16.5" fill="none" stroke="#4a3000" stroke-width="0.9"/><path d="M2.5 8 L8.2 2.6 H12 L8 8 Z" fill="url(#gg)" stroke="#0a7a0a" stroke-width="0.8"/></svg>
<div class="tr" style="left:39.5px;top:291px">倒角3</div>
<div class="hd" style="left:9px;top:318px;width:9px"></div>
<svg style="left:18px;top:307.5px" width="18" height="18" viewBox="0 0 18 18"><path d="M2 9.5 L8.5 2.5 L16 8.500 L9.500 15.500 Z" fill="none" stroke="#1a1a1a" stroke-width="1.1"/><path d="M6 7 L12 12.500 M1.5 2.500 L4 4.800 M14 13.500 L16.500 16" stroke="#1a1a1a" stroke-width="1"/></svg>
<div class="tr" style="left:39.5px;top:309px">基准面1</div>
<div class="hd" style="left:13px;top:336px;width:5px"></div>
<div class="pl" style="left:4px;top:332px"></div>
<svg style="left:18px;top:325.5px" width="18" height="18" viewBox="0 0 18 18"><path d="M1.5 2.500 H12.500 L16.500 5.500 V16.500 H5 L1.5 13.500 Z" fill="url(#gy)" stroke="#4a3000" stroke-width="1.2" stroke-linejoin="round"/><path d="M5 5.500 H16.500 M5 5.500 V16.500 M1.5 2.500 L5 5.500" fill="none" stroke="#4a3000" stroke-width="1"/><path d="M6.500 7 H15 V15 H6.500 Z" fill="#ffe56a" stroke="none"/><path d="M8 9.500 L11.500 8 L17.500 11.500 V16.500 L13.500 17.800 L8 13.500 Z" fill="url(#gg)" stroke="#0a7a0a" stroke-width="0.9"/><path d="M12 12 H17.500 V17.500 H12 Z" fill="#38e038" stroke="#0a7a0a" stroke-width="0.9"/><path d="M8 9.500 L12 12" stroke="#0a7a0a" stroke-width="0.8"/></svg>
<div class="tr" style="left:39.5px;top:327px">凸台-拉伸11</div>
<div class="hd" style="left:13px;top:354px;width:5px"></div>
<div class="pl" style="left:4px;top:350px"></div>
<svg style="left:18px;top:343.5px" width="18" height="18" viewBox="0 0 18 18"><path d="M1.5 2.500 H12.500 L16.500 5.500 V16.500 H5 L1.5 13.500 Z" fill="url(#gy)" stroke="#4a3000" stroke-width="1.2" stroke-linejoin="round"/><path d="M5 5.500 H16.500 M5 5.500 V16.500 M1.5 2.500 L5 5.500" fill="none" stroke="#4a3000" stroke-width="1"/><path d="M6.500 7 H15 V15 H6.500 Z" fill="#ffe56a" stroke="none"/><path d="M8 9.500 L11.500 8 L17.500 11.500 V16.500 L13.500 17.800 L8 13.500 Z" fill="url(#gg)" stroke="#0a7a0a" stroke-width="0.9"/><path d="M12 12 H17.500 V17.500 H12 Z" fill="#38e038" stroke="#0a7a0a" stroke-width="0.9"/><path d="M8 9.500 L12 12" stroke="#0a7a0a" stroke-width="0.8"/></svg>
<div class="tr" style="left:39.5px;top:345px">凸台-拉伸13</div>
<div class="hd" style="left:13px;top:372px;width:5px"></div>
<div class="pl" style="left:4px;top:368px"></div>
<svg style="left:18px;top:361.5px" width="18" height="18" viewBox="0 0 18 18"><path d="M1.5 2.500 H12.500 L16.500 5.500 V16.500 H5 L1.5 13.500 Z" fill="url(#gy)" stroke="#4a3000" stroke-width="1.2" stroke-linejoin="round"/><path d="M5 5.500 H16.500 M5 5.500 V16.500 M1.5 2.500 L5 5.500" fill="none" stroke="#4a3000" stroke-width="1"/><path d="M6.500 7 H15 V15 H6.500 Z" fill="#ffe56a" stroke="none"/><path d="M8 9.500 L11.500 8 L17.500 11.500 V16.500 L13.500 17.800 L8 13.500 Z" fill="url(#gg)" stroke="#0a7a0a" stroke-width="0.9"/><path d="M12 12 H17.500 V17.500 H12 Z" fill="#38e038" stroke="#0a7a0a" stroke-width="0.9"/><path d="M8 9.500 L12 12" stroke="#0a7a0a" stroke-width="0.8"/></svg>
<div class="tr" style="left:39.5px;top:363px">凸台-拉伸14</div>
<div class="hd" style="left:13px;top:390px;width:5px"></div>
<div class="pl" style="left:4px;top:386px"></div>
<svg style="left:18px;top:379.5px" width="18" height="18" viewBox="0 0 18 18"><path d="M9 1 V17" stroke="#000" stroke-width="1" stroke-dasharray="2.5 1.5" fill="none"/><path d="M2 10 Q2 5.5 9 5.5 Q16 5.5 16 10 Q16 12.5 13.5 12.5 Q11.5 12.5 11.5 10.5 Q11.5 9.5 9 9.5 Q6.5 9.5 6.5 10.5 Q6.5 12.5 4.5 12.5 Q2 12.5 2 10 Z" fill="url(#gy)" stroke="#4a3000" stroke-width="1"/><path d="M9 5.5 V9.5" stroke="#000" stroke-width="1" fill="none"/></svg>
<div class="tr" style="left:39.5px;top:381px">旋转2</div>
<div class="hd" style="left:13px;top:408px;width:5px"></div>
<div class="pl" style="left:4px;top:404px"></div>
<svg style="left:18px;top:397.5px" width="18" height="18" viewBox="0 0 18 18"><path d="M1.5 10.500 L8 1.5 L10 2 L16.500 7.500 V14 L8.500 16.500 L1.5 13 Z" fill="url(#gy)" stroke="#4a3000" stroke-width="1.1" stroke-linejoin="round"/><path d="M8 3.500 L13 9 L4.500 11 Z" fill="url(#gg)" stroke="#0a7a0a" stroke-width="0.9"/><path d="M1.5 10.500 L8.500 13.500 L16.500 10 M8.500 13.500 V16.500 M13 9 L16.500 7.500" fill="none" stroke="#4a3000" stroke-width="0.9"/></svg>
<div class="tr" style="left:39.5px;top:399px">筋2</div>
<div class="hd" style="left:9px;top:426px;width:9px"></div>
<svg style="left:18px;top:415.5px" width="18" height="18" viewBox="0 0 18 18"><ellipse cx="13.5899" cy="11.6" rx="1.9" ry="2.9" fill="url(#gg)" stroke="#0a7a0a" stroke-width="0.9"/><ellipse cx="9" cy="14.2" rx="1.9" ry="2.9" fill="url(#gg)" stroke="#0a7a0a" stroke-width="0.9"/><ellipse cx="4.41007" cy="11.6" rx="1.9" ry="2.9" fill="#f0a000" stroke="#804000" stroke-width="0.9"/><ellipse cx="4.41007" cy="6.4" rx="1.9" ry="2.9" fill="#f0a000" stroke="#804000" stroke-width="0.9"/><ellipse cx="9" cy="3.8" rx="1.9" ry="2.9" fill="url(#gg)" stroke="#0a7a0a" stroke-width="0.9"/><ellipse cx="13.5899" cy="6.4" rx="1.9" ry="2.9" fill="url(#gg)" stroke="#0a7a0a" stroke-width="0.9"/></svg>
<div class="tr" style="left:39.5px;top:417px">阵列(圆周)1</div>
<div class="hd" style="left:9px;top:444px;width:9px"></div>
<svg style="left:18px;top:433.5px" width="18" height="18" viewBox="0 0 18 18"><path d="M2 9.5 L8.5 2.5 L16 8.500 L9.500 15.500 Z" fill="none" stroke="#1a1a1a" stroke-width="1.1"/><path d="M6 7 L12 12.500 M1.5 2.500 L4 4.800 M14 13.500 L16.500 16" stroke="#1a1a1a" stroke-width="1"/></svg>
<div class="tr" style="left:39.5px;top:435px">基准面2</div>
<div class="hd" style="left:13px;top:462px;width:5px"></div>
<div class="pl" style="left:4px;top:458px"></div>
<svg style="left:18px;top:451.5px" width="18" height="18" viewBox="0 0 18 18"><path d="M1.5 2.500 H12.500 L16.500 5.500 V16.500 H5 L1.5 13.500 Z" fill="url(#gy)" stroke="#4a3000" stroke-width="1.2" stroke-linejoin="round"/><path d="M5 5.500 H16.500 M5 5.500 V16.500 M1.5 2.500 L5 5.500" fill="none" stroke="#4a3000" stroke-width="1"/><path d="M6.500 7 H15 V15 H6.500 Z" fill="#ffe56a" stroke="none"/><path d="M8 9.500 L11.500 8 L17.500 11.500 V16.500 L13.500 17.800 L8 13.500 Z" fill="url(#gg)" stroke="#0a7a0a" stroke-width="0.9"/><path d="M12 12 H17.500 V17.500 H12 Z" fill="#38e038" stroke="#0a7a0a" stroke-width="0.9"/><path d="M8 9.500 L12 12" stroke="#0a7a0a" stroke-width="0.8"/></svg>
<div class="tr" style="left:39.5px;top:453px">凸台-拉伸15</div>
<div class="hd" style="left:9px;top:480px;width:9px"></div>
<svg style="left:18px;top:469.5px" width="18" height="18" viewBox="0 0 18 18"><ellipse cx="13.5899" cy="11.6" rx="1.9" ry="2.9" fill="url(#gg)" stroke="#0a7a0a" stroke-width="0.9"/><ellipse cx="9" cy="14.2" rx="1.9" ry="2.9" fill="url(#gg)" stroke="#0a7a0a" stroke-width="0.9"/><ellipse cx="4.41007" cy="11.6" rx="1.9" ry="2.9" fill="#f0a000" stroke="#804000" stroke-width="0.9"/><ellipse cx="4.41007" cy="6.4" rx="1.9" ry="2.9" fill="#f0a000" stroke="#804000" stroke-width="0.9"/><ellipse cx="9" cy="3.8" rx="1.9" ry="2.9" fill="url(#gg)" stroke="#0a7a0a" stroke-width="0.9"/><ellipse cx="13.5899" cy="6.4" rx="1.9" ry="2.9" fill="url(#gg)" stroke="#0a7a0a" stroke-width="0.9"/></svg>
<div class="tr" style="left:39.5px;top:471px">阵列(圆周)2</div>
<div class="hd" style="left:9px;top:498px;width:9px"></div>
<svg style="left:18px;top:487.5px" width="18" height="18" viewBox="0 0 18 18"><path d="M2 2 L16 16" stroke="#333" stroke-width="1" stroke-dasharray="5 1.5 1.5 1.5"/></svg>
<div class="tr" style="left:39.5px;top:489px">基准轴2</div>
<div class="hd" style="left:13px;top:516px;width:5px"></div>
<div class="pl" style="left:4px;top:512px"></div>
<svg style="left:18px;top:505.5px" width="18" height="18" viewBox="0 0 18 18"><path d="M2 7 Q2 3 9 3 Q16 3 16 7 V13 Q16 16 13 16 V11 L9 8 L5 11 V16 Q2 16 2 13 Z" fill="url(#gy)" stroke="#4a3000" stroke-width="1.1"/><ellipse cx="9" cy="6.6" rx="6" ry="2.6" fill="#fff0a0" stroke="#4a3000" stroke-width="0.8"/><path d="M5.5 16 V11.5 L9 8.5 L12.5 11.5 V16 L9 12.5 Z" fill="url(#gg)" stroke="#0a7a0a" stroke-width="0.9"/></svg>
<div class="tr" style="left:39.5px;top:507px">切除-旋转1</div>
<div class="hd" style="left:13px;top:534px;width:5px"></div>
<div class="pl" style="left:4px;top:530px"></div>
<svg style="left:18px;top:523.5px" width="18" height="18" viewBox="0 0 18 18"><path d="M9 1 V17" stroke="#000" stroke-width="1" stroke-dasharray="2.5 1.5" fill="none"/><path d="M2 10 Q2 5.5 9 5.5 Q16 5.5 16 10 Q16 12.5 13.5 12.5 Q11.5 12.5 11.5 10.5 Q11.5 9.5 9 9.5 Q6.5 9.5 6.5 10.5 Q6.5 12.5 4.5 12.5 Q2 12.5 2 10 Z" fill="url(#gy)" stroke="#4a3000" stroke-width="1"/><path d="M9 5.5 V9.5" stroke="#000" stroke-width="1" fill="none"/></svg>
<div class="tr" style="left:39.5px;top:525px">旋转3</div>
<div class="hd" style="left:13px;top:552px;width:5px"></div>
<div class="pl" style="left:4px;top:548px"></div>
<svg style="left:18px;top:541.5px" width="18" height="18" viewBox="0 0 18 18"><path d="M2 4.5 L4.5 2 H16 V13.5 L13.5 16 H2 Z" fill="url(#gy)" stroke="#4a3000" stroke-width="1.1"/><path d="M2 4.5 H13.5 V16 M13.5 4.5 L16 2" fill="none" stroke="#4a3000" stroke-width="1"/><rect x="4.5" y="7" width="6.5" height="6.5" fill="#fff7c0" stroke="#4a3000" stroke-width="1"/><rect x="6.5" y="9" width="4" height="4" fill="url(#gg)" stroke="#0a7a0a" stroke-width="0.9"/></svg>
<div class="tr" style="left:39.5px;top:543px">切除-拉伸3</div>
<div class="hd" style="left:9px;top:570px;width:9px"></div>
<svg style="left:18px;top:559.5px" width="18" height="18" viewBox="0 0 18 18"><path d="M2.5 8 V13.5 Q2.5 16.5 9 16.5 Q15.5 16.5 15.5 13.5 V8" fill="url(#gy)" stroke="#4a3000" stroke-width="1"/><path d="M2.5 8.5 Q2.5 1.5 9 1.5 Q15.5 1.5 15.5 8.5 Q15.5 11 9 11 Q2.5 11 2.5 8.5 Z" fill="url(#gg)" stroke="#0a7a0a" stroke-width="1"/><path d="M4.5 6 Q5.5 3 9 2.8" stroke="#7cf07c" stroke-width="1.3" fill="none"/></svg>
<div class="tr" style="left:39.5px;top:561px">圆顶1</div>
<div class="hd" style="left:9px;top:588px;width:9px"></div>
<svg style="left:18px;top:577.5px" width="18" height="18" viewBox="0 0 18 18"><path d="M2 9.5 L8.5 2.5 L16 8.500 L9.500 15.500 Z" fill="none" stroke="#1a1a1a" stroke-width="1.1"/><path d="M6 7 L12 12.500 M1.5 2.500 L4 4.800 M14 13.500 L16.500 16" stroke="#1a1a1a" stroke-width="1"/></svg>
<div class="tr" style="left:39.5px;top:579px">基准面3</div>
<div class="hd" style="left:13px;top:606px;width:5px"></div>
<div class="pl" style="left:4px;top:602px"></div>
<svg style="left:18px;top:595.5px" width="18" height="18" viewBox="0 0 18 18"><path d="M1.5 2.500 H12.500 L16.500 5.500 V16.500 H5 L1.5 13.500 Z" fill="url(#gy)" stroke="#4a3000" stroke-width="1.2" stroke-linejoin="round"/><path d="M5 5.500 H16.500 M5 5.500 V16.500 M1.5 2.500 L5 5.500" fill="none" stroke="#4a3000" stroke-width="1"/><path d="M6.500 7 H15 V15 H6.500 Z" fill="#ffe56a" stroke="none"/><path d="M8 9.500 L11.500 8 L17.500 11.500 V16.500 L13.500 17.800 L8 13.500 Z" fill="url(#gg)" stroke="#0a7a0a" stroke-width="0.9"/><path d="M12 12 H17.500 V17.500 H12 Z" fill="#38e038" stroke="#0a7a0a" stroke-width="0.9"/><path d="M8 9.500 L12 12" stroke="#0a7a0a" stroke-width="0.8"/></svg>
<div class="tr" style="left:39.5px;top:597px">凸台-拉伸16</div>
</div>
<div class="a" style="left:17px;top:765px;width:196px;height:13px;box-sizing:border-box;background:#d4d0c8;border-top:1px solid #fff;border-left:1px solid #fff;border-right:1px solid #404040;border-bottom:1px solid #808080"></div>
<div class="a" style="left:213px;top:765px;width:30px;height:13px;background:#e6e4e0"></div>
<div class="a" style="left:4px;top:781px;width:270px;height:15px;background:#e6e4e0"></div>
<div class="a" style="left:4px;top:781px;width:13px;height:14px;box-sizing:border-box;background:#d4d0c8;border-top:1px solid #fff;border-left:1px solid #fff;border-right:1px solid #404040;border-bottom:1px solid #404040"></div>
<div class="a" style="left:7px;top:784px;width:0;height:0;border-top:4px solid transparent;border-bottom:4px solid transparent;border-right:4px solid #000"></div>
<div class="a" style="left:17px;top:781px;width:196px;height:14px;box-sizing:border-box;background:#d4d0c8;border-top:1px solid #fff;border-left:1px solid #fff;border-right:1px solid #404040;border-bottom:1px solid #404040"></div>
<div class="a" style="left:244px;top:781px;width:14px;height:14px;box-sizing:border-box;background:#d4d0c8;border-top:1px solid #fff;border-left:1px solid #fff;border-right:1px solid #404040;border-bottom:1px solid #404040"></div>
<div class="a" style="left:249px;top:784px;width:0;height:0;border-top:4px solid transparent;border-bottom:4px solid transparent;border-left:4px solid #000"></div>
<div class="a" style="left:258px;top:781px;width:15px;height:14px;background:#d4d0c8"></div>
<div class="a" style="left:260px;top:181px;width:14px;height:600px;background:#ebe9e4"></div>
<div class="a" style="left:260px;top:181px;width:14px;height:15px;box-sizing:border-box;background:#d4d0c8;border-top:1px solid #fff;border-left:1px solid #fff;border-right:1px solid #404040;border-bottom:1px solid #404040"></div>
<div class="a" style="left:263px;top:186px;width:0;height:0;border-left:4px solid transparent;border-right:4px solid transparent;border-bottom:4px solid #000"></div>
<div class="a" style="left:260px;top:196px;width:14px;height:375px;box-sizing:border-box;background:#d4d0c8;border-top:1px solid #fff;border-left:1px solid #fff;border-right:1px solid #404040;border-bottom:1px solid #404040"></div>
<div class="a" style="left:260px;top:766px;width:14px;height:15px;box-sizing:border-box;background:#d4d0c8;border-top:1px solid #fff;border-left:1px solid #fff;border-right:1px solid #404040;border-bottom:1px solid #404040"></div>
<div class="a" style="left:263px;top:772px;width:0;height:0;border-left:4px solid transparent;border-right:4px solid transparent;border-top:4px solid #000"></div>
<div class="a" style="left:274px;top:110px;width:2px;height:686px;background:#0c0c0c"></div>
<div class="a" id="vp" style="left:276px;top:110px;width:562px;height:671px;overflow:hidden;background:radial-gradient(ellipse 330px 300px at 505px 200px,#fff 0,rgba(255,255,255,0.96) 28%,rgba(255,255,253,0.55) 62%,rgba(255,255,250,0) 100%),radial-gradient(ellipse 620px 210px at 280px 200px,rgba(255,252,240,0.6),rgba(255,252,240,0.3) 50%,rgba(255,252,240,0) 100%),linear-gradient(90deg,rgba(222,200,168,0.3),rgba(222,200,168,0) 6%),linear-gradient(52deg,rgba(150,146,146,0.55) 0%,rgba(160,152,150,0.3) 22%,rgba(170,160,155,0) 46%),linear-gradient(#f3e6c4 0,#f5e8cc 20%,#f3e0cc 45%,#e8d0c0 64%,#cdbaae 82%,#bcaaa0 92%,#b0a098 100%)">
<svg style="left:-276px;top:-110px" width="843" height="819" viewBox="0 0 843 819"><defs>
<linearGradient id="gcore" x1="0" x2="1" y1="0" y2="0"><stop offset="0" stop-color="#0a8a0a"/><stop offset="0.4" stop-color="#066806"/><stop offset="0.55" stop-color="#005c00"/><stop offset="0.85" stop-color="#005800"/><stop offset="1" stop-color="#087a08"/></linearGradient>
<linearGradient id="gfinshade" x1="0" x2="1" y1="0" y2="0"><stop offset="0" stop-color="#000" stop-opacity="0"/><stop offset="0.5" stop-color="#000" stop-opacity="0"/><stop offset="0.62" stop-color="#001800" stop-opacity="0.32"/><stop offset="0.82" stop-color="#001800" stop-opacity="0.3"/><stop offset="0.95" stop-color="#000" stop-opacity="0.02"/><stop offset="1" stop-color="#000" stop-opacity="0"/></linearGradient>
<linearGradient id="gdome" x1="0" x2="1" y1="0" y2="0"><stop offset="0" stop-color="#0a6e0a"/><stop offset="0.35" stop-color="#086008"/><stop offset="0.7" stop-color="#044004"/><stop offset="1" stop-color="#086208"/></linearGradient>
<linearGradient id="gdomev" x1="0" x2="0" y1="0" y2="1"><stop offset="0" stop-color="#000" stop-opacity="0"/><stop offset="1" stop-color="#001000" stop-opacity="0.45"/></linearGradient>
<linearGradient id="gdisk" x1="0" x2="1" y1="0" y2="0"><stop offset="0" stop-color="#0a6c0a"/><stop offset="0.4" stop-color="#085a08"/><stop offset="0.75" stop-color="#054805"/><stop offset="1" stop-color="#0a6c0a"/></linearGradient>
<linearGradient id="gdisktop" x1="0" x2="1" y1="0" y2="0"><stop offset="0" stop-color="#0a860a"/><stop offset="0.5" stop-color="#087a08"/><stop offset="1" stop-color="#0a840a"/></linearGradient>
<linearGradient id="gband" x1="0" x2="1" y1="0" y2="0"><stop offset="0" stop-color="#1838a8"/><stop offset="0.45" stop-color="#2452dc"/><stop offset="0.8" stop-color="#2a5ce8"/><stop offset="1" stop-color="#1c44c0"/></linearGradient>
<linearGradient id="gbody" x1="0" x2="0" y1="0" y2="1"><stop offset="0" stop-color="#1a40c0"/><stop offset="0.2" stop-color="#1c48d0"/><stop offset="0.41" stop-color="#3c78f8"/><stop offset="0.55" stop-color="#1e4cda"/><stop offset="0.7" stop-color="#1438b0"/><stop offset="0.87" stop-color="#082080"/><stop offset="1" stop-color="#001450"/></linearGradient>
<linearGradient id="gneck" x1="0" x2="1" y1="0" y2="0"><stop offset="0" stop-color="#1636a8"/><stop offset="0.5" stop-color="#2a60f0"/><stop offset="0.75" stop-color="#3a78fa"/><stop offset="1" stop-color="#1838b0"/></linearGradient>
<linearGradient id="gshaft" x1="0" x2="1" y1="0" y2="0"><stop offset="0" stop-color="#5a5a5a"/><stop offset="0.5" stop-color="#a4a4a4"/><stop offset="1" stop-color="#4c4c4c"/></linearGradient>
<linearGradient id="gcyan" x1="0" x2="1" y1="0" y2="0"><stop offset="0" stop-color="#30e8d8"/><stop offset="0.3" stop-color="#00f8f8"/><stop offset="1" stop-color="#18fff8"/></linearGradient>
<radialGradient id="gbore" cx="0.3" cy="0.5" r="0.8"><stop offset="0" stop-color="#2a5cec"/><stop offset="0.6" stop-color="#1c48d0"/><stop offset="1" stop-color="#0c2a90"/></radialGradient>
<linearGradient id="glfb" x1="0" x2="0" y1="0" y2="1"><stop offset="0" stop-color="#2454dc"/><stop offset="0.45" stop-color="#1c48cc"/><stop offset="0.8" stop-color="#0c2c90"/><stop offset="1" stop-color="#08247c"/></linearGradient>
<linearGradient id="gfoot" x1="0" x2="1" y1="0" y2="0"><stop offset="0" stop-color="#1a3cb0"/><stop offset="0.5" stop-color="#3a78f8"/><stop offset="0.65" stop-color="#4a8cff"/><stop offset="1" stop-color="#1838ac"/></linearGradient>
</defs><path d="M344.7 621 L485.7 599.5 L646 608.5 L505 630 Z" fill="#067206" stroke="#000" stroke-width="1"/><path d="M344.7 621 L505 630 L513 734 L270 720.2 L270 695.5 Z" fill="#056405" stroke="#000" stroke-width="1"/><path d="M505 630 L646 608.5 L749 698 L513 734 Z" fill="#068c06" stroke="#000" stroke-width="1"/><path d="M376 603.5 L437 594 L615.5 594.5 L500.5 610 Z" fill="#2a5ce8" stroke="#00ff00" stroke-width="1.2"/><path d="M376 603.5 L490 609.5 Q500 610 500.5 612 L500.5 627.5 L376 620 Z" fill="#1640b8" stroke="#00ff00" stroke-width="1.2"/><path d="M500.5 610 L615.5 594.5 L615.5 606.5 L500.5 627.5 Z" fill="#2250d8" stroke="#00ff00" stroke-width="1.2"/><path d="M489 609.5 L489 627 M512 608.5 L512 625.5 M380 604 L380 620 M612 595 L612 607" stroke="#00ff00" stroke-width="1.1" fill="none"/><ellipse cx="393" cy="602.5" rx="5" ry="1.6" fill="#1a40b8" stroke="#00ff00" stroke-width="1"/><ellipse cx="500" cy="606" rx="5" ry="1.6" fill="#1a40b8" stroke="#00ff00" stroke-width="1"/><ellipse cx="593" cy="596" rx="5" ry="1.6" fill="#1a40b8" stroke="#00ff00" stroke-width="1"/><ellipse cx="470" cy="596" rx="5" ry="1.6" fill="#1a40b8" stroke="#00ff00" stroke-width="1"/><path d="M441 572 L548 572 Q548 586 553 592 Q560 597 559 600 Q556 607 494 607.5 Q432 607 429 600 Q428 596 436 592 Q441 586 441 572 Z" fill="url(#gfoot)" stroke="#00ff00" stroke-width="1.1"/><path d="M441 580 Q494 589 548 580 M440 585 Q494 594 549 585 M436 592 Q494 602 553 592" stroke="#00ff00" stroke-width="1.1" fill="none"/><path d="M618 405.5 L621.3 405.7 L627.7 404.6 L634.3 404.6 L640.7 405.7 L647.1 407.9 L653.2 411.1 L659 415.3 L664.4 420.4 L669.4 426.4 L673.9 433.3 L677.8 440.8 L681 448.9 L683.6 457.5 L685.5 466.4 L686.6 475.7 L687 485 L686.6 494.3 L685.5 503.6 L683.6 512.5 L681 521.1 L677.8 529.2 L673.9 536.7 L669.4 543.6 L664.4 549.6 L659 554.7 L653.2 558.9 L647.1 562.1 L640.7 564.3 L634.3 565.4 L627.7 565.4 L621.3 564.3 L618 565.5 Z" fill="#2456dc" stroke="#00ff00" stroke-width="1.2"/><ellipse cx="622" cy="485" rx="56" ry="79.5" fill="#002a78" stroke="#00ff00" stroke-width="1.2"/><path d="M572 421 L590 414 L606 409 L606 460 L572 456 Z" fill="#002a78"/><ellipse cx="582.2" cy="437.9" rx="5" ry="6.5" fill="#2a5ce0" stroke="#00ff00" stroke-width="1.2"/><ellipse cx="650.6" cy="442" rx="5" ry="6.5" fill="#2a5ce0" stroke="#00ff00" stroke-width="1.2"/><ellipse cx="654" cy="534" rx="5" ry="6.5" fill="#2a5ce0" stroke="#00ff00" stroke-width="1.2"/><path d="M600 455 Q640 440 647 488 Q647 520 625 545 L590 545 L590 455 Z" fill="#2656e0" stroke="#00ff00" stroke-width="1.2"/><path d="M400 462 L612 455 Q638 468 636 505 Q632 545 598 556 Q560 574 494 576 Q440 576 421 565 L400 560 Z" fill="url(#gbody)"/><path d="M585 466 Q612 458 626 476 Q640 505 622 540 Q610 554 596 557 Q618 520 606 486 Q600 472 585 466 Z" fill="#1a40c0" opacity="0.6"/><path d="M421 565 Q494 590 560 570 Q590 560 600 553" stroke="#0a2070" stroke-width="3" fill="none" opacity="0.7"/><path d="M614 463.1 L613.3 464.7 L611.4 466.3 L608.1 467.8 L603.5 469.4 L597.8 471 L590.9 472.5 L582.9 474 L574 475.4 L564.1 476.7 L553.5 477.9 L542.2 479 L530.4 479.9 L518.2 480.8 L505.6 481.5 L493 482 L480.4 482.4 L467.8 482.6 L455.6 482.6 L443.8 482.5 L432.5 482.2 L421.9 481.8 L412 481.2 L403.1 480.4 L395.1 479.5 L388.2 478.5 L382.5 477.4 L377.9 476.1 L374.6 474.8 L372.7 473.3 L372 471.9 L372.7 470.3 L374.6 468.7 L377.9 467.2 L382.5 465.6 L388.2 464 L395.1 462.5 L403.1 461 L412 459.6 L421.9 458.3 L432.5 457.1 L443.8 456 L455.6 455.1 L467.8 454.2 L480.4 453.5 L493 453 L505.6 452.6 L518.2 452.4 L530.4 452.4 L542.2 452.5 L553.5 452.8 L564.1 453.2 L574 453.8 L582.9 454.6 L590.9 455.5 L597.8 456.5 L603.5 457.6 L608.1 458.9 L611.4 460.2 L613.3 461.7 L614 463.1 Z" fill="#1e48cc" stroke="#00ff00" stroke-width="1.1"/><path d="M605 455.2 L604.4 456.4 L602.7 457.7 L599.9 459 L595.9 460.2 L590.9 461.5 L584.9 462.7 L578 463.9 L570.3 465 L561.7 466.1 L552.5 467.1 L542.7 468 L532.4 468.8 L521.8 469.5 L511 470 L500 470.5 L489 470.8 L478.2 471 L467.6 471.1 L457.3 471 L447.5 470.8 L438.3 470.5 L429.7 470.1 L422 469.5 L415.1 468.8 L409.1 468 L404.1 467.1 L400.1 466.1 L397.3 465.1 L395.6 464 L395 462.8 L395.6 461.6 L397.3 460.3 L400.1 459 L404.1 457.8 L409.1 456.5 L415.1 455.3 L422 454.1 L429.7 453 L438.3 451.9 L447.5 450.9 L457.3 450 L467.6 449.2 L478.2 448.5 L489 448 L500 447.5 L511 447.2 L521.8 447 L532.4 446.9 L542.7 447 L552.5 447.2 L561.7 447.5 L570.3 447.9 L578 448.5 L584.9 449.2 L590.9 450 L595.9 450.9 L599.9 451.9 L602.7 452.9 L604.4 454 L605 455.2 Z" fill="#2454dc" stroke="#00ff00" stroke-width="1.1"/><path d="M596 450 L595.5 451.1 L593.9 452.2 L591.2 453.4 L587.5 454.5 L582.9 455.7 L577.3 456.8 L570.8 457.9 L563.6 458.9 L555.6 459.9 L547 460.8 L537.9 461.7 L528.3 462.4 L518.4 463 L508.2 463.6 L498 464 L487.8 464.3 L477.6 464.5 L467.7 464.6 L458.1 464.5 L449 464.4 L440.4 464.1 L432.4 463.7 L425.2 463.1 L418.7 462.5 L413.1 461.8 L408.5 461 L404.8 460.1 L402.1 459.1 L400.5 458.1 L400 457 L400.5 455.9 L402.1 454.8 L404.8 453.6 L408.5 452.5 L413.1 451.3 L418.7 450.2 L425.2 449.1 L432.4 448.1 L440.4 447.1 L449 446.2 L458.1 445.3 L467.7 444.6 L477.6 444 L487.8 443.4 L498 443 L508.2 442.7 L518.4 442.5 L528.3 442.4 L537.9 442.5 L547 442.6 L555.6 442.9 L563.6 443.3 L570.8 443.9 L577.3 444.5 L582.9 445.2 L587.5 446 L591.2 446.9 L593.9 447.9 L595.5 448.9 L596 450 Z" fill="#2a5ee8" stroke="#00ff00" stroke-width="1.1"/><path d="M403 428 L574 424 L572 449 Q500 466 410 461 Z" fill="url(#gneck)" stroke="#00ff00" stroke-width="1.1"/><path d="M402 431 L470 434 L470 454 Q440 458 411 462 Z" fill="url(#gcyan)" stroke="#00ff00" stroke-width="1.2"/><path d="M409 433 L470 436 L470 446 Q440 449 417 454 Z" fill="#5cfff8" stroke="#00ff00" stroke-width="1"/><rect x="470" y="432" width="18.500" height="28" fill="url(#gshaft)"/><path d="M488 434 Q492 436 491 447 L489 460" stroke="#00ff00" stroke-width="1.1" fill="none"/><path d="M370.7 409.5 L371 410.5 L371.8 411.4 L373.3 412.3 L375.2 413.2 L377.8 414 L380.8 414.8 L384.4 415.5 L388.5 416.2 L393 416.8 L398.1 417.4 L403.5 417.8 L409.4 418.3 L415.7 418.6 L422.3 418.9 L429.2 419.1 L436.4 419.3 L443.9 419.4 L451.5 419.4 L459.4 419.3 L467.4 419.2 L475.5 418.9 L483.6 418.7 L491.8 418.3 L499.9 417.9 L508 417.4 L516 416.9 L523.9 416.3 L531.5 415.6 L539 414.9 L546.2 414.1 L553.1 413.3 L559.7 412.4 L566 411.5 L571.9 410.6 L577.3 409.6 L582.4 408.7 L586.9 407.7 L591 406.6 L594.6 405.6 L597.6 404.6 L600.2 403.5 L602.1 402.5 L603.6 401.5 L604.4 400.5 L604.7 399.5 L604.7 415.5 L604.4 416.5 L603.6 417.5 L602.1 418.5 L600.2 419.5 L597.6 420.6 L594.6 421.6 L591 422.6 L586.9 423.7 L582.4 424.7 L577.3 425.6 L571.9 426.6 L566 427.5 L559.7 428.4 L553.1 429.3 L546.2 430.1 L539 430.9 L531.5 431.6 L523.9 432.3 L516 432.9 L508 433.4 L499.9 433.9 L491.8 434.3 L483.6 434.7 L475.5 434.9 L467.4 435.2 L459.4 435.3 L451.5 435.4 L443.9 435.4 L436.4 435.3 L429.2 435.1 L422.3 434.9 L415.7 434.6 L409.4 434.3 L403.5 433.8 L398.1 433.4 L393 432.8 L388.5 432.2 L384.4 431.5 L380.8 430.8 L377.8 430 L375.2 429.2 L373.3 428.3 L371.8 427.4 L371 426.5 L370.7 425.5 Z" fill="url(#gband)" stroke="#00ff00" stroke-width="1.1"/><path d="M370.7 392.5 L371 393.5 L371.8 394.4 L373.3 395.3 L375.2 396.2 L377.8 397 L380.8 397.8 L384.4 398.5 L388.5 399.2 L393 399.8 L398.1 400.4 L403.5 400.8 L409.4 401.3 L415.7 401.6 L422.3 401.9 L429.2 402.1 L436.4 402.3 L443.9 402.4 L451.5 402.4 L459.4 402.3 L467.4 402.2 L475.5 401.9 L483.6 401.7 L491.8 401.3 L499.9 400.9 L508 400.4 L516 399.9 L523.9 399.3 L531.5 398.6 L539 397.9 L546.2 397.1 L553.1 396.3 L559.7 395.4 L566 394.5 L571.9 393.6 L577.3 392.6 L582.4 391.7 L586.9 390.7 L591 389.6 L594.6 388.6 L597.6 387.6 L600.2 386.5 L602.1 385.5 L603.6 384.5 L604.4 383.5 L604.7 382.5 L604.7 399.5 L604.4 400.5 L603.6 401.5 L602.1 402.5 L600.2 403.5 L597.6 404.6 L594.6 405.6 L591 406.6 L586.9 407.7 L582.4 408.7 L577.3 409.6 L571.9 410.6 L566 411.5 L559.7 412.4 L553.1 413.3 L546.2 414.1 L539 414.9 L531.5 415.6 L523.9 416.3 L516 416.9 L508 417.4 L499.9 417.9 L491.8 418.3 L483.6 418.7 L475.5 418.9 L467.4 419.2 L459.4 419.3 L451.5 419.4 L443.9 419.4 L436.4 419.3 L429.2 419.1 L422.3 418.9 L415.7 418.6 L409.4 418.3 L403.5 417.8 L398.1 417.4 L393 416.8 L388.5 416.2 L384.4 415.5 L380.8 414.8 L377.8 414 L375.2 413.2 L373.3 412.3 L371.8 411.4 L371 410.5 L370.7 409.5 Z" fill="url(#gdisk)" stroke="#00ff00" stroke-width="1.1"/><path d="M371 408.3 L371.8 409.2 L373.3 410.1 L375.2 411 L377.8 411.8 L380.8 412.6 L384.4 413.3 L388.5 414 L393 414.6 L398.1 415.2 L403.5 415.6 L409.4 416.1 L415.7 416.4 L422.3 416.7 L429.2 416.9 L436.4 417.1 L443.9 417.2 L451.5 417.2 L459.4 417.1 L467.4 417 L475.5 416.7 L483.6 416.5 L491.8 416.1 L499.9 415.7 L508 415.2 L516 414.7 L523.9 414.1 L531.5 413.4 L539 412.7 L546.2 411.9 L553.1 411.1 L559.7 410.2 L566 409.3 L571.9 408.4 L577.3 407.4 L582.4 406.5 L586.9 405.5 L591 404.4 L594.6 403.4 L597.6 402.4 L600.2 401.3 L602.1 400.3 L603.6 399.3 L604.4 398.3" fill="none" stroke="#00ff00" stroke-width="1"/><path d="M604.7 382.5 L604.1 384 L602.1 385.5 L599 387 L594.6 388.6 L589 390.1 L582.4 391.7 L574.6 393.1 L566 394.5 L556.5 395.9 L546.2 397.1 L535.3 398.2 L523.9 399.3 L512 400.1 L499.9 400.9 L487.7 401.5 L475.5 401.9 L463.4 402.2 L451.5 402.4 L440.1 402.3 L429.2 402.1 L418.9 401.8 L409.4 401.3 L400.8 400.6 L393 399.8 L386.4 398.9 L380.8 397.8 L376.4 396.6 L373.3 395.3 L371.3 394 L370.7 392.5 L371.3 391 L373.3 389.5 L376.4 388 L380.8 386.4 L386.4 384.9 L393 383.3 L400.8 381.9 L409.4 380.5 L418.9 379.1 L429.2 377.9 L440.1 376.8 L451.5 375.7 L463.4 374.9 L475.5 374.1 L487.7 373.5 L499.9 373.1 L512 372.8 L523.9 372.6 L535.3 372.7 L546.2 372.9 L556.5 373.2 L566 373.7 L574.6 374.4 L582.4 375.2 L589 376.1 L594.6 377.2 L599 378.4 L602.1 379.7 L604.1 381 L604.7 382.5 Z" fill="url(#gdisktop)" stroke="#00ff00" stroke-width="1.1"/><path d="M449 380 L533 377 L533 393 Q490 398 449 395 Z" fill="#075407" stroke="#00ff00" stroke-width="1.1"/><path d="M407 376 L417 374 L416 386 L405 385 Z" fill="#0a700a" stroke="#00ff00" stroke-width="1"/><path d="M418 371.3 L431.4 372.5 L426.4 399 L413 397.4 Z" fill="#0a720a" stroke="#00ff00" stroke-width="1.2"/><path d="M431.4 372.5 Q438 379 449 380 L449 395 L426.4 399 Z" fill="#0c800c" stroke="#00ff00" stroke-width="1.2"/><path d="M426.4 399.2 L449 395.3" stroke="#5aa0ff" stroke-width="2" fill="none"/><path d="M436.500 390.500 v6 M433.500 393.500 h6" stroke="#7ab8ff" stroke-width="1" fill="none"/><path d="M551 366.5 L564 364 L570 392 L557 394 Z" fill="#0a720a" stroke="#00ff00" stroke-width="1.2"/><path d="M551 366.5 Q545 375 533 377 L533 393 L557 394 Z" fill="#086408" stroke="#00ff00" stroke-width="1.2"/><path d="M383.6 335 L383.6 346 Q388 362 414 372 Q430 380 449 380.5 L530 378 Q548 376 562 366 Q586 352 588.8 340 L588.8 328 Z" fill="url(#gdome)" stroke="#00ff00" stroke-width="1.2"/><path d="M383.6 335 L383.6 346 Q388 362 414 372 Q430 380 449 380.5 L530 378 Q548 376 562 366 Q586 352 588.8 340 L588.8 328 Z" fill="url(#gdomev)"/><path d="M383.6 345 Q480 362 588.8 338.5" stroke="#00ff00" stroke-width="1.1" fill="none"/><path d="M361.9 108 L594.9 108 L602 317 L601.4 318.1 L599.5 319.3 L596.3 320.5 L591.9 321.7 L586.4 322.9 L579.8 324.1 L572.1 325.3 L563.5 326.5 L554 327.6 L543.8 328.6 L532.9 329.6 L521.5 330.4 L509.7 331.2 L497.7 331.9 L485.5 332.5 L473.3 333 L461.3 333.3 L449.5 333.5 L438.1 333.6 L427.2 333.6 L417 333.4 L407.5 333.2 L398.9 332.7 L391.2 332.2 L384.6 331.6 L379.1 330.8 L374.7 330 L371.5 329.1 L369.6 328.1 L369 327 Z" fill="url(#gcore)"/><path d="M378.5 108 L362.1 108 L369.1 325.5 L385.6 325.7 Z" fill="#0b930b" stroke="#00ff00" stroke-width="0.75" stroke-linejoin="round"/><path d="M378.5 108 L385.6 324.7" stroke="#004a00" stroke-width="1.1" fill="none"/><path d="M381.7 108 L364.4 108 L371.5 327 L388.9 328.7 Z" fill="#0b950b" stroke="#00ff00" stroke-width="0.75" stroke-linejoin="round"/><path d="M381.7 108 L388.9 327.7" stroke="#004a00" stroke-width="1.1" fill="none"/><path d="M387.3 108 L369.5 108 L376.6 328.4 L394.6 331.5 Z" fill="#0b950b" stroke="#00ff00" stroke-width="0.75" stroke-linejoin="round"/><path d="M387.3 108 L394.6 330.5" stroke="#004a00" stroke-width="1.1" fill="none"/><path d="M368.8 108 L370.1 108 L377.3 328.7 L376 328.1 Z" fill="#0c9a0c" stroke="#00ff00" stroke-width="0.75"/><path d="M395.2 108 L377.2 108 L384.5 329.6 L402.6 334.1 Z" fill="#0b950b" stroke="#00ff00" stroke-width="0.75" stroke-linejoin="round"/><path d="M395.2 108 L402.6 333.1" stroke="#004a00" stroke-width="1.1" fill="none"/><path d="M376.3 108 L378.2 108 L385.4 330 L383.5 329.1 Z" fill="#0c9a0c" stroke="#00ff00" stroke-width="0.75"/><path d="M383.5 329.1 L385.4 330 L403.4 334.1 L401.7 334.1 Z" fill="#004600" stroke="#00ff00" stroke-width="0.75" stroke-linejoin="round"/><path d="M405.1 108 L387.5 108 L394.8 330.5 L412.6 336.3 Z" fill="#0b950b" stroke="#00ff00" stroke-width="0.75" stroke-linejoin="round"/><path d="M405.1 108 L412.6 335.3" stroke="#004a00" stroke-width="1.1" fill="none"/><path d="M386.3 108 L388.7 108 L395.9 331.1 L393.6 329.9 Z" fill="#0c9a0c" stroke="#00ff00" stroke-width="0.75"/><path d="M393.6 329.9 L395.9 331.1 L413.6 336.3 L411.5 336.3 Z" fill="#004600" stroke="#00ff00" stroke-width="0.75" stroke-linejoin="round"/><path d="M416.9 108 L400 108 L407.3 331.1 L424.4 338.1 Z" fill="#0b940b" stroke="#00ff00" stroke-width="0.75" stroke-linejoin="round"/><path d="M416.9 108 L424.4 337.1" stroke="#004a00" stroke-width="1.1" fill="none"/><path d="M398.6 108 L401.4 108 L408.7 331.8 L405.9 330.4 Z" fill="#0c9a0c" stroke="#00ff00" stroke-width="0.75"/><path d="M405.9 330.4 L408.7 331.8 L425.6 338.1 L423.1 338.1 Z" fill="#004600" stroke="#00ff00" stroke-width="0.75" stroke-linejoin="round"/><path d="M430.1 108 L414.5 108 L421.8 331.5 L437.6 339.5 Z" fill="#0b920b" stroke="#00ff00" stroke-width="0.75" stroke-linejoin="round"/><path d="M430.1 108 L437.6 338.5" stroke="#004a00" stroke-width="1.1" fill="none"/><path d="M412.9 108 L416.1 108 L423.3 332.3 L420.2 330.7 Z" fill="#0c9a0c" stroke="#00ff00" stroke-width="0.75"/><path d="M420.2 330.7 L423.3 332.3 L439.1 339.5 L436.2 339.5 Z" fill="#004600" stroke="#00ff00" stroke-width="0.75" stroke-linejoin="round"/><path d="M579.2 108 L594.2 108 L601 316.2 L586 318.5 Z" fill="#099109" stroke="#00ff00" stroke-width="0.75" stroke-linejoin="round"/><path d="M579.2 108 L586 317.5" stroke="#004a00" stroke-width="1.1" fill="none"/><path d="M444.5 108 L430.5 108 L437.8 331.6 L452.1 340.5 Z" fill="#0b900b" stroke="#00ff00" stroke-width="0.75" stroke-linejoin="round"/><path d="M444.5 108 L452.1 339.5" stroke="#004a00" stroke-width="1.1" fill="none"/><path d="M428.8 108 L432.2 108 L439.5 332.5 L436 330.8 Z" fill="#0c9a0c" stroke="#00ff00" stroke-width="0.75"/><path d="M436 330.8 L439.5 332.5 L453.7 340.5 L450.6 340.5 Z" fill="#004600" stroke="#00ff00" stroke-width="0.75" stroke-linejoin="round"/><path d="M577.5 108 L590.8 108 L597.6 317.9 L584.4 321.7 Z" fill="#088e08" stroke="#00ff00" stroke-width="0.75" stroke-linejoin="round"/><path d="M577.5 108 L584.4 320.7" stroke="#004a00" stroke-width="1.1" fill="none"/><path d="M590.3 108 L591.3 108 L598.1 318.2 L597.1 317.7 Z" fill="#0c9a0c" stroke="#00ff00" stroke-width="0.75"/><path d="M459.8 108 L447.7 108 L455 331.4 L467.4 340.9 Z" fill="#0a8d0a" stroke="#00ff00" stroke-width="0.75" stroke-linejoin="round"/><path d="M459.8 108 L467.4 339.9" stroke="#004a00" stroke-width="1.1" fill="none"/><path d="M445.9 108 L449.5 108 L456.8 332.4 L453.1 330.5 Z" fill="#0c9a0c" stroke="#00ff00" stroke-width="0.75"/><path d="M453.1 330.5 L456.8 332.4 L469 340.9 L465.7 340.9 Z" fill="#004600" stroke="#00ff00" stroke-width="0.75" stroke-linejoin="round"/><path d="M573.4 108 L584.6 108 L591.5 319.8 L580.4 324.9 Z" fill="#088a08" stroke="#00ff00" stroke-width="0.75" stroke-linejoin="round"/><path d="M573.4 108 L580.4 323.9" stroke="#004a00" stroke-width="1.1" fill="none"/><path d="M583.8 108 L585.4 108 L592.3 320.1 L590.7 319.4 Z" fill="#0c9a0c" stroke="#00ff00" stroke-width="0.75"/><path d="M475.5 108 L465.7 108 L472.9 331 L483.1 340.8 Z" fill="#0a8a0a" stroke="#00ff00" stroke-width="0.75" stroke-linejoin="round"/><path d="M475.5 108 L483.1 339.8" stroke="#004a00" stroke-width="1.1" fill="none"/><path d="M463.8 108 L467.5 108 L474.8 331.9 L471 330 Z" fill="#0c9a0c" stroke="#00ff00" stroke-width="0.75"/><path d="M471 330 L474.8 331.9 L484.8 340.8 L481.4 340.8 Z" fill="#004600" stroke="#00ff00" stroke-width="0.75" stroke-linejoin="round"/><path d="M566.9 108 L575.8 108 L582.8 321.6 L574 327.9 Z" fill="#078607" stroke="#00ff00" stroke-width="0.75" stroke-linejoin="round"/><path d="M566.9 108 L574 326.9" stroke="#004a00" stroke-width="1.1" fill="none"/><path d="M574.8 108 L576.8 108 L583.8 322.1 L581.7 321.1 Z" fill="#0c9a0c" stroke="#00ff00" stroke-width="0.75"/><path d="M581.7 321.1 L583.8 322.1 L575 327.9 L573.1 327.9 Z" fill="#004600" stroke="#00ff00" stroke-width="0.75" stroke-linejoin="round"/><path d="M491.3 108 L483.9 108 L491.2 330.3 L498.9 340.3 Z" fill="#098609" stroke="#00ff00" stroke-width="0.75" stroke-linejoin="round"/><path d="M491.3 108 L498.9 339.3" stroke="#004a00" stroke-width="1.1" fill="none"/><path d="M482 108 L485.8 108 L493.1 331.2 L489.3 329.3 Z" fill="#0c9a0c" stroke="#00ff00" stroke-width="0.75"/><path d="M489.3 329.3 L493.1 331.2 L500.6 340.3 L497.2 340.3 Z" fill="#004600" stroke="#00ff00" stroke-width="0.75" stroke-linejoin="round"/><path d="M558.2 108 L564.6 108 L571.6 323.4 L565.5 330.8 Z" fill="#078207" stroke="#00ff00" stroke-width="0.75" stroke-linejoin="round"/><path d="M558.2 108 L565.5 329.8" stroke="#004a00" stroke-width="1.1" fill="none"/><path d="M563.3 108 L565.9 108 L572.9 324 L570.3 322.7 Z" fill="#0c9a0c" stroke="#00ff00" stroke-width="0.75"/><path d="M570.3 322.7 L572.9 324 L566.6 330.8 L564.3 330.8 Z" fill="#004600" stroke="#00ff00" stroke-width="0.75" stroke-linejoin="round"/><path d="M506.8 108 L502.1 108 L509.3 329.3 L514.3 339.2 Z" fill="#098209" stroke="#00ff00" stroke-width="0.75" stroke-linejoin="round"/><path d="M506.8 108 L514.3 338.2" stroke="#004a00" stroke-width="1.1" fill="none"/><path d="M500.2 108 L503.9 108 L511.1 330.2 L507.4 328.3 Z" fill="#0c9a0c" stroke="#00ff00" stroke-width="0.75"/><path d="M507.4 328.3 L511.1 330.2 L516 339.2 L512.7 339.2 Z" fill="#004600" stroke="#00ff00" stroke-width="0.75" stroke-linejoin="round"/><path d="M547.6 108 L551.3 108 L558.3 325.1 L555 333.5 Z" fill="#067e06" stroke="#00ff00" stroke-width="0.75" stroke-linejoin="round"/><path d="M549.8 108 L552.8 108 L559.8 325.8 L556.9 324.3 Z" fill="#0c9a0c" stroke="#00ff00" stroke-width="0.75"/><path d="M556.9 324.3 L559.8 325.8 L556.3 333.5 L553.6 333.5 Z" fill="#004600" stroke="#00ff00" stroke-width="0.75" stroke-linejoin="round"/><path d="M521.6 108 L519.6 108 L526.8 328.1 L529.1 337.7 Z" fill="#087e08" stroke="#00ff00" stroke-width="0.75" stroke-linejoin="round"/><path d="M517.8 108 L521.4 108 L528.6 328.9 L525 327.2 Z" fill="#0c9a0c" stroke="#00ff00" stroke-width="0.75"/><path d="M525 327.2 L528.6 328.9 L530.7 337.7 L527.5 337.7 Z" fill="#004600" stroke="#00ff00" stroke-width="0.75" stroke-linejoin="round"/><path d="M535.3 108 L536.2 108 L543.3 326.6 L542.7 335.8 Z" fill="#067906" stroke="#00ff00" stroke-width="0.75" stroke-linejoin="round"/><path d="M534.5 108 L537.8 108 L544.9 327.5 L541.6 325.8 Z" fill="#0c9a0c" stroke="#00ff00" stroke-width="0.75"/><path d="M541.6 325.8 L544.9 327.5 L544.2 335.8 L541.2 335.8 Z" fill="#004600" stroke="#00ff00" stroke-width="0.75" stroke-linejoin="round"/><path d="M361.9 108 L369 325" stroke="#00ff00" stroke-width="1.4" fill="none"/><path d="M594.9 108 L601.7 315" stroke="#00ff00" stroke-width="1.4" fill="none"/><path d="M355 445.5 L361 446.3 L367.3 446 L373.6 446.7 L379.8 448.3 L385.8 450.9 L391.6 454.4 L397 458.7 L402.1 463.9 L406.8 469.8 L410.9 476.4 L414.5 483.5 L417.5 491.2 L419.9 499.3 L421.6 507.7 L422.7 516.3 L423 525 L422.7 533.7 L421.6 542.3 L419.9 550.7 L417.5 558.8 L414.5 566.5 L410.9 573.6 L406.8 580.2 L402.1 586.1 L397 591.3 L391.6 595.6 L385.8 599.1 L379.8 601.7 L373.6 603.3 L367.3 604 L361 603.7 L355 603.5 Z" fill="url(#glfb)" stroke="#00ff00" stroke-width="1.2"/><path d="M412.5 524.5 L409.7 548.9 L401.5 570.9 L388.8 588.4 L372.8 599.6 L355 603.5 L337.2 599.6 L321.2 588.4 L308.5 570.9 L300.3 548.9 L297.5 524.5 L300.3 500.1 L308.5 478.1 L321.2 460.6 L337.2 449.4 L355 445.5 L372.8 449.4 L388.8 460.6 L401.5 478.1 L409.7 500.1 L412.5 524.5 Z" fill="#002a78" stroke="#00ff00" stroke-width="1.2"/><path d="M399 525 L395.7 547.2 L386.4 566 L372.5 578.6 L356 583 L339.5 578.6 L325.6 566 L316.3 547.2 L313 525 L316.3 502.8 L325.6 484 L339.5 471.4 L356 467 L372.5 471.4 L386.4 484 L395.7 502.8 L399 525 Z" fill="#04308a" stroke="#00ff00" stroke-width="1.1"/><path d="M400.5 525 L397.2 546.8 L387.9 565.3 L374 577.7 L357.5 582 L341 577.7 L327.1 565.3 L317.8 546.8 L314.5 525 L317.8 503.2 L327.1 484.7 L341 472.3 L357.5 468 L374 472.3 L387.9 484.7 L397.2 503.2 L400.5 525 Z" fill="none" stroke="#00ff00" stroke-width="1.1"/><path d="M379.1 526 L375.8 542.2 L366.9 554.1 L354.6 558.5 L342.4 554.1 L333.4 542.2 L330.1 526 L333.4 509.8 L342.4 497.9 L354.6 493.5 L366.9 497.9 L375.8 509.8 L379.1 526 Z" fill="url(#gbore)" stroke="#00ff00" stroke-width="1.1"/><path d="M366.9 497.9 L372.2 503.4 L376.2 510.7 L378.6 519.2 L379 528.3 L377.6 537.1 L374.4 545.1 L369.7 551.6 L363.8 556.1 L357.2 558.3 L350.3 558 L345.5 555.5 L351.1 555.8 L356.5 553.8 L361.3 549.6 L365.2 543.6 L367.8 536.3 L369 528.1 L368.6 519.8 L366.7 511.9 L363.4 505.2 L359 500 Z" fill="#0a2a86" opacity="0.85"/><ellipse cx="319.7" cy="476.7" rx="5" ry="6.8" fill="#2858e0" stroke="#00ff00" stroke-width="1.2"/><ellipse cx="388.8" cy="479.8" rx="5" ry="6.8" fill="#2858e0" stroke="#00ff00" stroke-width="1.2"/><ellipse cx="322.9" cy="569" rx="5" ry="6.8" fill="#2858e0" stroke="#00ff00" stroke-width="1.2"/><ellipse cx="391.7" cy="573.4" rx="5" ry="6.8" fill="#2858e0" stroke="#00ff00" stroke-width="1.2"/><path d="M620.5 465 L619.8 466.3 L617.7 467.6 L614.3 468.9 L609.5 470.3 L603.5 471.6 L596.2 472.8 L587.9 474 L578.5 475.1 L568.1 476.1 L557 477.1 L545.2 477.9 L532.7 478.6 L519.9 479.2 L506.8 479.7 L493.5 480 L480.2 480.2 L467.1 480.3 L454.3 480.2 L441.8 480 L430 479.6 L418.9 479.1 L408.5 478.5 L399.1 477.8 L390.8 476.9 L383.5 475.9 L377.5 474.9 L372.7 473.8 L369.3 472.6 L367.2 471.3 L366.5 470 L367.2 468.7 L369.3 467.4 L372.7 466.1 L377.5 464.7 L383.5 463.4 L390.8 462.2 L399.1 461 L408.5 459.9 L418.9 458.9 L430 457.9 L441.8 457.1 L454.3 456.4 L467.1 455.8 L480.2 455.3 L493.5 455 L506.8 454.8 L519.9 454.7 L532.7 454.8 L545.2 455 L557 455.4 L568.1 455.9 L578.5 456.5 L587.9 457.2 L596.2 458.1 L603.5 459.1 L609.5 460.1 L614.3 461.2 L617.7 462.4 L619.8 463.7 L620.5 465 Z" fill="none" stroke="#f08000" stroke-width="1.5"/><path d="M366.6 470.4 Q349 482 345.7 504.5 Q345 530 362.8 542.5 Q378 552 397 554 Q419 545 421.6 519.7 Q422 500 416 489 Q411 479 404.5 476" fill="none" stroke="#f08000" stroke-width="1.5"/><path d="M392 481 Q373 492 370 510 Q368 530 378 540.6" fill="none" stroke="#f08000" stroke-width="1.5"/><path d="M620 465 Q642 484 640 508 Q636 528 617 535.5 Q560 552 492 555.8 Q420 556 374 542.5" fill="none" stroke="#f08000" stroke-width="1.5"/><path d="M378 540.6 Q454 533 550 527.5 Q558 526 558 517 L558 486 Q560 468 583 462 Q604 466 612 485 Q617 505 610 520 Q604 530 594 531 L601 525" fill="none" stroke="#f08000" stroke-width="1.5"/><rect x="475.500" y="544.500" width="33" height="13" fill="#c8ccd8" stroke="#303030" stroke-width="1"/><text x="477" y="555.5" font-size="12" font-family='"Liberation Sans","Noto Sans CJK SC",sans-serif' fill="#000" textLength="30" lengthAdjust="spacingAndGlyphs">旋转1</text><path d="M316.3 722 V701" stroke="#e02030" stroke-width="3"/><path d="M312 703 L316.3 693.500 L320.600 703 Z" fill="#e02030"/><path d="M316 723.500 H331" stroke="#208030" stroke-width="3"/><path d="M330 718.500 L338.500 724 L330 729 Z" fill="#208030"/><path d="M320 721 L332 717.500" stroke="#1020c0" stroke-width="2.5"/><path d="M326 719 L331 715.500 L335 720 Z" fill="#1828d0"/><text x="311" y="691.5" font-size="9" font-weight="bold" font-family='"Liberation Mono",monospace' fill="#e01010">X</text><text x="335" y="722" font-size="9" font-weight="bold" font-family='"Liberation Mono",monospace' fill="#1010e0">Z</text><text x="337.500" y="728.5" font-size="8" font-weight="bold" font-family='"Liberation Mono",monospace' fill="#108010">Y</text></svg>
</div>
<div class="a" style="left:276px;top:781px;width:563px;height:1px;background:#111"></div>
<div class="a" style="left:838px;top:117px;width:1px;height:680px;background:linear-gradient(#6a7890,#5a6478 70%,#3c3c44)"></div>
<div class="a" style="left:839px;top:600px;width:2px;height:197px;background:linear-gradient(rgba(60,60,68,0),rgba(60,60,68,0.9) 70%)"></div>
<div class="a" style="left:276px;top:782px;width:563px;height:14px;background:#e7e8ec"></div>
<div class="a" style="left:273px;top:434px;width:10px;height:37px;box-sizing:border-box;background:#e2e5ec;border-top:2px solid #111;border-right:2px solid #111"></div>
<div class="a" style="left:277px;top:442px;width:0;height:0;border-top:2.5px solid transparent;border-bottom:2.5px solid transparent;border-right:3px solid #222"></div>
<div class="a" style="left:277px;top:451px;width:0;height:0;border-top:2.5px solid transparent;border-bottom:2.5px solid transparent;border-right:3px solid #222"></div>
<div class="a" style="left:277px;top:460px;width:0;height:0;border-top:2.5px solid transparent;border-bottom:2.5px solid transparent;border-right:3px solid #222"></div>
<svg style="left:405px;top:113px;opacity:0.88" width="300" height="22"><g transform="translate(1,0)"><circle cx="6.5" cy="6.5" r="5.2" fill="#b8dcc0" fill-opacity="0.5" stroke="#86a496" stroke-width="1.7"/><path d="M10.5 10.5 L15.5 15.5" stroke="#7ab0dc" stroke-width="2.6" stroke-linecap="round"/><path d="M4 6.5 H9 M6.5 4 V9" stroke="#4a6a58" stroke-width="1.2"/></g><g transform="translate(25,0)"><circle cx="6.5" cy="6.5" r="5.2" fill="#b8dcc0" fill-opacity="0.5" stroke="#86a496" stroke-width="1.7"/><path d="M10.5 10.5 L15.5 15.5" stroke="#7ab0dc" stroke-width="2.6" stroke-linecap="round"/><path d="M4 5 H9 V8 H4 Z" stroke="#4a6a58" stroke-width="1.2"/></g><g transform="translate(48,0)"><path d="M2 4 L6 1.5 L15 10 L11 14 Z" fill="#a8d0e8" stroke="#3a6a98" stroke-width="1"/><path d="M11 14 L15 10 L17 12.5 L14 16 Z" fill="#d8ecf8" stroke="#3a6a98" stroke-width="1"/><path d="M16 3 h-4 M12 3 l2 -1.5 M12 3 l2 1.5" stroke="#2050c0" stroke-width="1" fill="none"/></g><g transform="translate(70,0)"><path d="M2 5 L6 2 H14 L16 5 V16 H12 V8 H6 V16 H2 Z" fill="#3a80c8" stroke="#1a4a80" stroke-width="1"/><path d="M2.500 6 H5.500 V15.500 H2.500 Z M12.500 6 H15.500 V15.500 H12.500 Z" fill="#f0d040"/><path d="M2.500 7 l3 1.500 l-3 1.500 l3 1.500 l-3 1.500 l3 1.500 M12.500 7 l3 1.500 l-3 1.500 l3 1.500 l-3 1.500 l3 1.500" stroke="#806000" stroke-width="0.6" fill="none"/><path d="M6 8 H12 V16 H6 Z" fill="#0a6a0a" fill-opacity="0.5"/></g><g transform="translate(93,0)"><path d="M2 6 L6 2.5 H16 V12.5 L12 16.5 H2 Z" fill="#58a8d8" stroke="#24608c" stroke-width="1"/><path d="M2 6 H12 V16.5 M12 6 L16 2.5" fill="none" stroke="#24608c" stroke-width="1"/><path d="M9 1 V11 H18" stroke="#c02020" stroke-width="0.9" fill="none"/></g><path d="M118 9 h6 l-3 3.5 z" fill="#3a5a3a"/><g transform="translate(130,0)"><path d="M2 6 L6 2.5 H16 V12.5 L12 16.5 H2 Z" fill="#7ab8e0" stroke="#2a5a88" stroke-width="1"/><path d="M2 6 H12 V16.5 M12 6 L16 2.5" fill="none" stroke="#2a5a88" stroke-width="1"/><path d="M3 7 H11 V15.5 H3 Z" fill="#a8d4f0"/></g><path d="M155 9 h6 l-3 3.5 z" fill="#3a5a3a"/><g transform="translate(167,0)"><circle cx="5" cy="11" r="2.8" fill="#b0d0c0" stroke="#405050" stroke-width="1.1"/><circle cx="14" cy="11" r="2.8" fill="#b0d0c0" stroke="#405050" stroke-width="1.1"/><path d="M7.5 10 Q9.5 8 11.5 10 M2.5 9.5 L4 3.5 M16.5 9.5 L15 3.5" fill="none" stroke="#405050" stroke-width="1.1"/></g><path d="M193 9 h6 l-3 3.5 z" fill="#333"/><g transform="translate(204,0)"><circle cx="10" cy="9.5" r="8.5" fill="#eee" stroke="#777" stroke-width="0.8"/><path d="M10 9.5 L10 1 A8.5 8.5 0 0 1 18 12.5 Z" fill="#e03020"/><path d="M10 9.5 L18 12.5 A8.5 8.5 0 0 1 3.5 15 Z" fill="#30b830"/><path d="M10 9.5 L3.5 15 A8.5 8.5 0 0 1 4 3.5 Z" fill="#f0c000"/><path d="M10 9.5 L4 3.5 A8.5 8.5 0 0 1 10 1 Z" fill="#3060e0"/><ellipse cx="8" cy="5.5" rx="3.5" ry="2.2" fill="#fff" opacity="0.55"/></g><g transform="translate(228,0)"><path d="M1 13 H19 V19 H1 Z" fill="#fff"/><path d="M1 13 h3 v3 h-3z M7 13 h3 v3 h-3z M13 13 h3 v3 h-3z M4 16 h3 v3 h-3z M10 16 h3 v3 h-3z M16 16 h3 v3 h-3z" fill="#333"/><circle cx="10" cy="8.5" r="6.5" fill="#eee" stroke="#777" stroke-width="0.8"/><path d="M10 8.5 L10 2 A6.5 6.5 0 0 1 16 11 Z" fill="#e03020"/><path d="M10 8.5 L16 11 A6.5 6.5 0 0 1 5 12.8 Z" fill="#30b830"/><path d="M10 8.5 L5 12.8 A6.5 6.5 0 0 1 5.5 4 Z" fill="#f0c000"/><path d="M10 8.5 L5.5 4 A6.5 6.5 0 0 1 10 2 Z" fill="#3060e0"/></g><path d="M253 9 h6 l-3 3.5 z" fill="#333"/><g transform="translate(263,0)"><rect x="1.5" y="3.5" width="16" height="11" fill="#e8eef4" stroke="#444" stroke-width="1.2"/><path d="M6 18 H13 M9.5 14.5 V18" stroke="#444" stroke-width="1.4"/><path d="M4 11 L8 6 L11 9.5" fill="none" stroke="#c08040" stroke-width="1.4"/><path d="M8 5.5 Q11 3.5 16 4.5 Q16.5 7 15 7.5 L11.5 8.5 Z" fill="#f0c898" stroke="#a06830" stroke-width="0.7"/></g><path d="M289 9 h6 l-3 3.5 z" fill="#333"/></svg><svg style="left:720px;top:115px" width="112" height="16"><rect x="1.5" y="1.5" width="13" height="12" fill="#f4f2ea" stroke="#555" stroke-width="1"/><path d="M4 4 v7 M12 4 v7 M6 7.5 h4" stroke="#444" stroke-width="1.2" fill="none"/><path d="M7 5 h3 v5 h-3z" fill="none" stroke="#444" stroke-width="0.9"/><rect x="23.5" y="1.5" width="13" height="12" fill="#f4f2ea" stroke="#555" stroke-width="1"/><path d="M26 4 v7 M34 4 v7" stroke="#444" stroke-width="1.2" fill="none"/><path d="M28 5 h3 v5 h-3z M31 7.5 h2" fill="none" stroke="#444" stroke-width="0.9"/><rect x="48.5" y="10.5" width="9" height="3" fill="#f4f2ea" stroke="#555" stroke-width="1"/><rect x="74.500" y="2.500" width="9" height="7" fill="#f4f2ea" stroke="#555" stroke-width="1"/><rect x="70.500" y="6.500" width="9" height="7" fill="#f4f2ea" stroke="#555" stroke-width="1"/><path d="M94 2 L106 13 M106 2 L94 13" stroke="#555" stroke-width="2.8" fill="none"/><path d="M94 2 L106 13 M106 2 L94 13" stroke="#f4f2ea" stroke-width="1" fill="none"/></svg>
<div class="a" style="left:815px;top:168px;width:24px;height:25px;box-sizing:border-box;border:1px solid #222;border-right:none;background:#e8e4da"></div>
<svg style="left:818px;top:171px" width="19" height="19" viewBox="0 0 19 19"><path d="M2 10 L9.5 2.5 L17 10" fill="none" stroke="#7a5a00" stroke-width="1.8"/><path d="M4.5 9.5 V17 H14.5 V9.5 L9.5 4.5 Z" fill="#ffe040" stroke="#7a5a00" stroke-width="1"/><rect x="8" y="11.5" width="3.2" height="5.5" fill="#fff8d0" stroke="#7a5a00" stroke-width="0.8"/></svg>
<div class="a" style="left:815px;top:192px;width:24px;height:25px;box-sizing:border-box;border:1px solid #222;border-right:none;background:#aeaeae"></div>
<svg style="left:818px;top:195px" width="19" height="19" viewBox="0 0 19 19"><rect x="2.5" y="8" width="4" height="9.5" fill="#28b028" stroke="#0a600a" stroke-width="0.9"/><rect x="6.5" y="5" width="4" height="12.5" fill="#f0b020" stroke="#805000" stroke-width="0.9"/><rect x="10.5" y="2.5" width="4" height="15" fill="#3a68e0" stroke="#102880" stroke-width="0.9"/><path d="M14.5 6 L17 8 V17.5 H14.5" fill="#d8d8d8" stroke="#555" stroke-width="0.8"/></svg>
<div class="a" style="left:815px;top:217px;width:24px;height:25px;box-sizing:border-box;border:1px solid #222;border-right:none;background:#aeaeae"></div>
<svg style="left:818px;top:220px" width="19" height="19" viewBox="0 0 19 19"><path d="M1.5 5.5 L3 3.5 H8 L9.5 5.5 H15 V15.5 H1.5 Z" fill="#f0b830" stroke="#906000" stroke-width="1"/><path d="M1.5 15.5 L4.5 8.5 H18 L15 15.5 Z" fill="#ffe070" stroke="#906000" stroke-width="1"/></svg>
<div class="a" style="left:815px;top:241px;width:24px;height:25px;box-sizing:border-box;border:1px solid #222;border-right:none;background:#aeaeae"></div>
<svg style="left:818px;top:244px" width="19" height="19" viewBox="0 0 19 19"><rect x="3" y="2" width="14" height="9.5" fill="#fff" stroke="#333" stroke-width="1"/><rect x="4.5" y="3.5" width="5" height="3" fill="#2848d0"/><rect x="4.5" y="7.5" width="5" height="2.5" fill="#2848d0"/><path d="M11 4.5 H15.5 M11 6.5 H15.5 M11 8.5 H15.5" stroke="#2848d0" stroke-width="1"/><path d="M2 15.5 H9 M6.5 13 L9.5 15.5 L6.5 18" stroke="#1838d0" stroke-width="1.7" fill="none"/></svg>
<div class="a" style="left:815px;top:265px;width:24px;height:25px;box-sizing:border-box;border:1px solid #222;border-right:none;background:#aeaeae"></div>
<svg style="left:818px;top:268px" width="19" height="19" viewBox="0 0 20 19"><circle cx="10" cy="9.5" r="8" fill="#e8e8e8" stroke="#444" stroke-width="0.8"/><path d="M10 9.5 L10 1.5 A8 8 0 0 1 17.6 12 Z" fill="#e02818"/><path d="M10 9.5 L17.6 12 A8 8 0 0 1 3.5 14.2 Z" fill="#28b828"/><path d="M10 9.5 L3.5 14.2 A8 8 0 0 1 4 4.2 Z" fill="#f0c000"/><path d="M10 9.5 L4 4.2 A8 8 0 0 1 10 1.5 Z" fill="#2858e0"/><ellipse cx="8" cy="5.5" rx="3" ry="2" fill="#fff" opacity="0.55"/></svg>
<div class="a" style="left:815px;top:290px;width:24px;height:25px;box-sizing:border-box;border:1px solid #222;border-right:none;background:#aeaeae"></div>
<svg style="left:818px;top:293px" width="19" height="19" viewBox="0 0 19 19"><rect x="3" y="7" width="12.5" height="10.5" fill="#f6f6f6" stroke="#555" stroke-width="1"/><path d="M5 10 H13.5 M5 12.5 H13.5 M5 15 H13.5" stroke="#888" stroke-width="1"/><path d="M6.5 8.5 L10.5 3.5 L13.5 6.5" fill="none" stroke="#c08040" stroke-width="1.5"/><path d="M10 3.5 Q13 1.5 17.5 2.5 Q18.5 5 16.5 6 L13.5 6.5 Z" fill="#f0c898" stroke="#a06830" stroke-width="0.8"/></svg>
<div class="a" style="left:4px;top:795px;width:835px;height:1px;background:#858585"></div>
<div class="a" style="left:4px;top:796px;width:835px;height:2px;background:#f2f3f6"></div>
<div class="a" style="left:4px;top:798px;width:835px;height:17px;background:#a9b5c1"></div>
<div class="t" style="left:5px;top:799px;letter-spacing:-0.1px">离心泵(立)</div>
<div class="t" style="left:519px;top:799px">长度:<span style="font-family:'Liberation Mono',monospace;font-size:10.5px;letter-spacing:-0.3px"> 43.057mm</span></div>
<div class="a" style="left:611px;top:799px;width:6px;height:15px;box-sizing:border-box;border-left:1px solid #7c8792;border-top:1px solid #7c8792;border-right:1px solid #e6eaee;border-bottom:1px solid #e6eaee"></div>
<div class="a" style="left:619px;top:799px;width:6px;height:15px;box-sizing:border-box;border-left:1px solid #7c8792;border-top:1px solid #7c8792;border-right:1px solid #e6eaee;border-bottom:1px solid #e6eaee"></div>
<div class="a" style="left:627px;top:799px;width:6px;height:15px;box-sizing:border-box;border-left:1px solid #7c8792;border-top:1px solid #7c8792;border-right:1px solid #e6eaee;border-bottom:1px solid #e6eaee"></div>
<div class="a" style="left:635px;top:799px;width:6px;height:15px;box-sizing:border-box;border-left:1px solid #7c8792;border-top:1px solid #7c8792;border-right:1px solid #e6eaee;border-bottom:1px solid #e6eaee"></div>
<div class="a" style="left:643px;top:799px;width:6px;height:15px;box-sizing:border-box;border-left:1px solid #7c8792;border-top:1px solid #7c8792;border-right:1px solid #e6eaee;border-bottom:1px solid #e6eaee"></div>
<div class="t" style="left:679px;top:799px">自定义</div>
<div class="a" style="left:731px;top:804px;width:0;height:0;border-left:3px solid transparent;border-right:3px solid transparent;border-bottom:4px solid #222"></div>
<div class="a" style="left:754px;top:799px;width:13px;height:14px;box-sizing:border-box;border:1px solid #000;background:#fff;color:#0a9a0a;font-weight:bold;font-size:11px;line-height:12px;text-align:center;font-family:'Liberation Sans',sans-serif">?</div>
<svg style="left:817px;top:798px" width="16" height="16" viewBox="0 0 16 16"><path d="M2 10.5 L9 2.5 H14 V7.5 L6.5 15 Z" fill="#ffd428" stroke="#8a6400" stroke-width="1.1" transform="rotate(8 8 8)"/><circle cx="11.8" cy="5.2" r="1.2" fill="#fff" stroke="#8a6400" stroke-width="0.7"/><path d="M5.5 10.5 L9.5 6.5 M7 12 L11 8" stroke="#8a6400" stroke-width="0.8"/></svg>
<div class="a" style="left:690px;top:755px;width:160px;height:24px;background:#f4f8fc;border-radius:4px;box-shadow:0 0 1px #9ab"></div><svg style="left:674px;top:750px" width="32" height="31"><g transform="rotate(-9 16 15.500)"><rect x="3" y="3.500" width="26" height="24" rx="3.500" fill="#f0481c"/><text x="16" y="24.500" text-anchor="middle" font-family='"Liberation Sans",sans-serif' font-weight="bold" font-style="italic" font-size="25" fill="#fff" transform="translate(-2 0) scale(1.12 1)">S</text></g></svg><div class="t" style="left:709px;top:758px;font-size:15px;line-height:18px;font-weight:bold;color:#1c6ad8">中</div><svg style="left:730px;top:758px" width="16" height="18"><path d="M9 2 A7 7 0 1 1 2 12.5 A6.5 6.5 0 0 0 9 2 Z" fill="#1c6ad8"/></svg><svg style="left:752px;top:758px" width="16" height="18"><circle cx="4.5" cy="6" r="1.7" fill="none" stroke="#1c6ad8" stroke-width="1.4"/><path d="M10 10.5 a1.8 1.8 0 1 1 2 2 q0 2 -2.5 3.2 q1.3 -1.5 0.5 -5.2z" fill="#1c6ad8"/></svg><svg style="left:772px;top:760px" width="20" height="14"><rect x="0.5" y="0.5" width="19" height="13" rx="2" fill="#1c6ad8"/><path d="M3 4 h2 M7 4 h2 M11 4 h2 M15 4 h2 M3 7 h2 M7 7 h2 M11 7 h2 M15 7 h2 M5 10.3 h10" stroke="#fff" stroke-width="1.6"/></svg><svg style="left:796px;top:758px" width="18" height="18"><circle cx="8" cy="4.5" r="3.2" fill="#b8bec6"/><path d="M1.5 15 Q2 8.5 8 8.5 Q13 8.5 14.5 13 V15 Z" fill="#b8bec6"/><rect x="9.5" y="10.500" width="7" height="6" rx="1" fill="#98a0aa"/><text x="13" y="15.6" text-anchor="middle" font-size="6" fill="#fff" font-family='"Liberation Sans",sans-serif'>7</text></svg><svg style="left:818px;top:759px" width="18" height="16"><path d="M5.5 1 Q9 3.5 12.500 1 L17 4 L15 8 L13 7 V15 H5 V7 L3 8 L1 4 Z" fill="#1c6ad8"/></svg><svg style="left:838px;top:764px" width="6" height="10"><path d="M1 9 L5 1 V9 Z" fill="#1c6ad8"/></svg>
</body></html>
